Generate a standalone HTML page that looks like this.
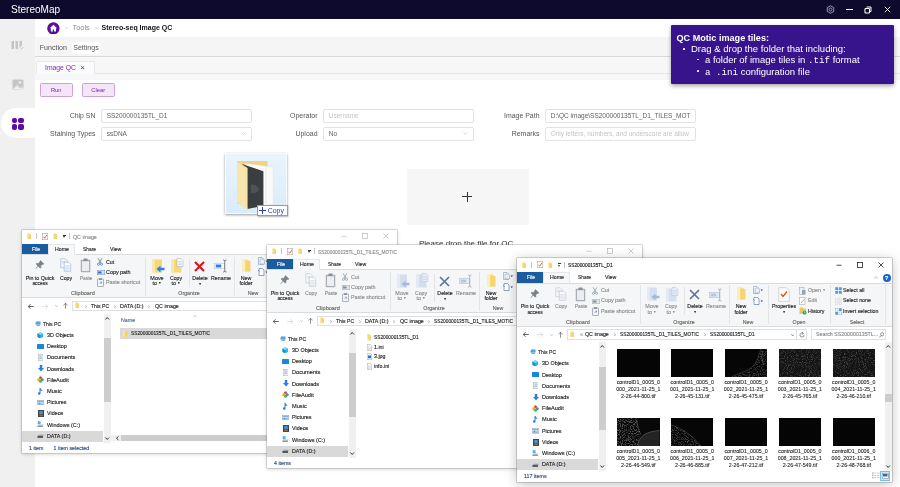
<!DOCTYPE html><html><head><meta charset="utf-8"><title>StereoMap</title><style>
*{box-sizing:border-box;margin:0;padding:0}
html,body{width:900px;height:487px;overflow:hidden;background:#fff;font-family:"Liberation Sans",sans-serif;}
body{position:relative;opacity:0.999}
.abs{position:absolute}
.t{position:absolute;white-space:nowrap;line-height:1}
.ic{position:absolute;display:block}
/* app */
#titlebar{left:0;top:0;width:900px;height:18.7px;background:#0e0a2d}
#sidebar{left:0;top:18px;width:35px;height:469px;background:#f0f0f0}
#sideact{left:0.5px;top:108px;width:34.5px;height:30px;background:#fff;border-radius:15px 0 0 15px}
#funcrow{left:35px;top:37px;width:865px;height:20.3px;background:#f5f5f5;border-bottom:1px solid #d9d9d9}
#tabrow{left:35px;top:57px;width:865px;height:23.3px;background:#f7f7f7}
#tabline{left:94px;top:72.7px;width:806px;height:1px;background:#e6e6e6}
#tab{left:35.5px;top:61.3px;width:59px;height:12.4px;background:#fbfbfb;border:1px solid #e8e8e8;border-bottom:none;border-radius:2px 2px 0 0}
.btn{position:absolute;height:14px;top:83px;width:32.5px;border:1px solid #c9a3d6;background:#f4e6f8;border-radius:1.5px;color:#7a1fa2;font-size:5.8px;text-align:center;line-height:12.5px}
.inp{position:absolute;height:13.5px;border:1px solid #e2e2e2;border-radius:2px;background:#fff;font-size:6.5px;color:#606266;line-height:12px;padding-left:4.7px;white-space:nowrap;overflow:hidden}
.inp.ph{color:#c0c4cc}
.lab{position:absolute;font-size:6.95px;color:#555;text-align:right;white-space:nowrap;line-height:13.5px;width:80px}
#drop{left:407px;top:168.6px;width:121.7px;height:56.3px;background:#f6f6f6}
#tip{left:671px;top:25px;width:223px;height:58.5px;background:#38148c;box-shadow:0 2px 4px rgba(0,0,0,.35);border-radius:1px;color:#fff}
/* explorer */
.win{position:absolute;width:375px;height:223.6px;background:#fff;box-shadow:0 0 0 0.5px rgba(110,110,110,.45),0 1px 4px rgba(0,0,0,.2);overflow:hidden;font-size:5.8px;color:#222;-webkit-text-stroke:0.14px}
.win.act{box-shadow:0 0 0 0.5px rgba(90,90,90,.5),0 2px 11px rgba(0,0,0,.25)}
.win .tabs{position:absolute;left:0;top:14px;width:100%;height:11px;background:#fff}
.win .file{position:absolute;left:0;top:14px;width:26px;height:10.5px;background:#1a5c9e;color:#fff;text-align:center;line-height:10.5px;font-size:5.8px}
.win .home{position:absolute;left:26px;top:14px;width:27px;height:11px;background:#f7f8f9;border:0.5px solid #e6e7e8;border-bottom:none;text-align:center;line-height:10.5px;font-size:5.8px}
.win .ribbon{position:absolute;left:0;top:24.5px;width:100%;height:44px;background:#f5f6f7;border-top:0.5px solid #dadbdc;border-bottom:0.5px solid #dadbdc}
.win .sep{position:absolute;top:27px;width:0.5px;height:39px;background:#e4e5e6}
.win .g{color:#8c8c8c}
.win .rl{position:absolute;white-space:nowrap;line-height:1;transform:translateX(-50%);text-align:center}
.win .grp{color:#666}
.win .addr{position:absolute;top:71px;height:10.5px;border:0.5px solid #e0e0e0;background:#fff}
.win .nav{position:absolute;left:0;top:84px;width:83px;height:129px}
.win .sb{position:absolute;background:#f0f0f0}
.win .thumb{position:absolute;background:#cdcdcd}
.win .sel{position:absolute;background:#d9d9d9}
.win .th{position:absolute;width:42.5px;height:28px;background:#050505;overflow:hidden}
.win .cap{position:absolute;width:54px;text-align:center;font-size:5.3px;line-height:7.1px;color:#1a1a1a;-webkit-text-stroke:0.08px;transform:translateX(-50%)}
</style></head><body>
<svg width="0" height="0" style="position:absolute"><defs><filter id="nz0" x="0" y="0" width="100%" height="100%"><feTurbulence type="fractalNoise" baseFrequency="0.95" numOctaves="2" seed="3"/><feColorMatrix type="matrix" values="0 0 0 0 1  0 0 0 0 1  0 0 0 0 1  4 0 0 0 -2.0"/></filter><filter id="nz1" x="0" y="0" width="100%" height="100%"><feTurbulence type="fractalNoise" baseFrequency="0.95" numOctaves="2" seed="11"/><feColorMatrix type="matrix" values="0 0 0 0 1  0 0 0 0 1  0 0 0 0 1  4 0 0 0 -2.0"/></filter><filter id="nz2" x="0" y="0" width="100%" height="100%"><feTurbulence type="fractalNoise" baseFrequency="0.9" numOctaves="2" seed="5"/><feColorMatrix type="matrix" values="0 0 0 0 1  0 0 0 0 1  0 0 0 0 1  5 0 0 0 -2.3"/></filter><filter id="nz3" x="0" y="0" width="100%" height="100%"><feTurbulence type="fractalNoise" baseFrequency="0.9" numOctaves="2" seed="8"/><feColorMatrix type="matrix" values="0 0 0 0 1  0 0 0 0 1  0 0 0 0 1  5 0 0 0 -2.3"/></filter><filter id="nz4" x="0" y="0" width="100%" height="100%"><feTurbulence type="fractalNoise" baseFrequency="0.9" numOctaves="2" seed="21"/><feColorMatrix type="matrix" values="0 0 0 0 1  0 0 0 0 1  0 0 0 0 1  5 0 0 0 -2.4"/></filter></defs></svg>
<div class="abs" id="sidebar"></div>
<div class="abs" id="sideact"></div>
<div class="abs" id="titlebar"></div>
<div class="t" style="left:11px;top:4.5px;font-size:10.05px;color:#fff;">StereoMap</div>
<svg class="ic" style="left:826px;top:5px;width:9px;height:9px" viewBox="0 0 18 18"><path d="M9 1.5 15.5 5.2v7.6L9 16.500 2.500 12.800V5.200z" fill="none" stroke="#b9b6cc" stroke-width="1.6"/><circle cx="9" cy="9" r="3" fill="none" stroke="#b9b6cc" stroke-width="1.5"/></svg>
<div class="abs" style="left:845.5px;top:9px;width:7.5px;height:1.2px;background:#fff"></div>
<svg class="ic" style="left:864px;top:5.500px;width:8px;height:8px" viewBox="0 0 16 16"><path d="M5 2h9v9h-3" fill="none" stroke="#fff" stroke-width="2"/><rect x="2" y="5" width="9" height="9" rx="1.5" fill="none" stroke="#fff" stroke-width="2.2"/></svg>
<svg class="ic" style="left:883.5px;top:6px;width:7px;height:7px" viewBox="0 0 14 14"><path d="M1.500 1.500l11 11M12.500 1.500l-11 11" stroke="#fff" stroke-width="1.800" fill="none"/></svg>
<svg class="ic" style="left:11px;top:40px;width:13px;height:10px" viewBox="0 0 26 20"><path d="M1 3l5-2v16l-5 2zM9 1l5 2v16l-5-2zM17 3l5-2v9l-5 7z" fill="#c4c4c4"/><path d="M20 19l4-5" stroke="#c4c4c4" stroke-width="2"/></svg>
<svg class="ic" style="left:11.500px;top:78.500px;width:12px;height:11px" viewBox="0 0 24 22"><rect x="1" y="1" width="22" height="20" rx="2" fill="#c6c6c6"/><path d="M1 20l9-9 6 6 3-2 4 4v2z" fill="#f0f0f0"/><path d="M2 19l8-6 6 5 3-2 3 3" stroke="#c6c6c6" stroke-width="1.500" fill="none"/><circle cx="16" cy="7" r="2.600" fill="#f0f0f0"/></svg>
<div class="abs" style="left:11.7px;top:117.8px;width:5.5px;height:5.5px;border-radius:1.9px;background:#5d0aa6"></div>
<div class="abs" style="left:18.299999999999997px;top:117.8px;width:5.5px;height:5.5px;border-radius:1.9px;background:#5d0aa6"></div>
<div class="abs" style="left:11.7px;top:124.39999999999999px;width:5.5px;height:5.5px;border-radius:1.9px;background:#5d0aa6"></div>
<div class="abs" style="left:18.299999999999997px;top:124.39999999999999px;width:5.5px;height:5.5px;border-radius:1.9px;background:#5d0aa6"></div>
<svg class="ic" style="left:47px;top:21.700px;width:12.8px;height:12.8px" viewBox="0 0 26 26"><circle cx="13" cy="13" r="12.500" fill="#5b0f9e"/><path d="M13 5.500 5.500 12.500h2.300v7h4v-4.500h2.400v4.500h4v-7h2.300z" fill="#fff"/></svg>
<div class="t" style="left:64.5px;top:25px;font-size:6px;color:#c8c8c8;">&gt;</div>
<div class="t" style="left:72.5px;top:24.2px;font-size:7.4px;color:#8a8a8a;">Tools</div>
<div class="t" style="left:94.5px;top:25px;font-size:6px;color:#c8c8c8;">&gt;</div>
<div class="t" style="left:101.5px;top:24.2px;font-size:7.0px;color:#111;font-weight:bold;">Stereo-seq Image QC</div>
<div class="abs" id="funcrow"></div>
<div class="abs" style="left:71.500px;top:41.500px;width:28px;height:12.500px;background:#fff;border-radius:1.500px"></div>
<div class="t" style="left:39.8px;top:44px;font-size:7.05px;color:#555;">Function</div>
<div class="t" style="left:73.2px;top:44px;font-size:7.05px;color:#555;">Settings</div>
<div class="abs" id="tabrow"></div>
<div class="abs" id="tabline"></div>
<div class="abs" id="tab"></div>
<div class="t" style="left:45px;top:65.2px;font-size:6.8px;color:#8a2bb0;">Image QC</div>
<div class="t" style="left:80.3px;top:64px;font-size:8px;color:#6a1b9a;">×</div>
<div class="btn" style="left:40px">Run</div>
<div class="btn" style="left:82px">Clear</div>
<div class="lab" style="left:15.5px;top:109px">Chip SN</div>
<div class="inp" style="left:101px;top:109px;width:151px">SS200000135TL_D1</div>
<div class="lab" style="left:237.5px;top:109px">Operator</div>
<div class="inp ph" style="left:323px;top:109px;width:151px">Username</div>
<div class="lab" style="left:459.5px;top:109px">Image Path</div>
<div class="inp" style="left:545px;top:109px;width:151px">D:\QC image\SS200000135TL_D1_TILES_MOT</div>
<div class="lab" style="left:15.5px;top:127px">Staining Types</div>
<div class="inp" style="left:101px;top:127px;width:151px">ssDNA</div>
<div class="lab" style="left:237.5px;top:127px">Upload</div>
<div class="inp" style="left:323px;top:127px;width:151px">No</div>
<div class="lab" style="left:459.5px;top:127px">Remarks</div>
<div class="inp ph" style="left:545px;top:127px;width:151px">Only letters, numbers, and underscore are allow</div>
<svg class="ic" style="left:241.0px;top:132.300px;width:5px;height:3px" viewBox="0 0 10 6"><path d="M1 1l4 4 4-4" fill="none" stroke="#c0c4cc" stroke-width="1.200"/></svg>
<svg class="ic" style="left:463.0px;top:132.300px;width:5px;height:3px" viewBox="0 0 10 6"><path d="M1 1l4 4 4-4" fill="none" stroke="#c0c4cc" stroke-width="1.200"/></svg>
<div class="abs" id="drop"></div>
<div class="abs" style="left:462px;top:196px;width:10px;height:1px;background:#333"></div>
<div class="abs" style="left:466.500px;top:191.500px;width:1px;height:10px;background:#333"></div>
<div class="t" style="left:419px;top:240px;font-size:8px;color:#333;">Please drop the file for QC</div>
<div class="abs" style="left:225px;top:153px;width:62px;height:61px;background:linear-gradient(#e9f4fc,#d9ecf9);box-shadow:0 1px 2.500px rgba(0,0,0,.4);border:0.500px solid #f4fafe"></div>
<svg class="ic" style="left:236px;top:160px;width:40px;height:52px" viewBox="0 0 80 104">
<path d="M2 2h61v86H2z" fill="#efd488"/>
<path d="M18.6 6.800l55.800 7.500v74l-19.600 3.200z" fill="#fafafa" stroke="#dcdcdc" stroke-width="0.8"/>
<path d="M60 14v76" stroke="#e2e2e2" stroke-width="1.2"/>
<path d="M12 8l42.800 14.600v68.800L22.800 98z" fill="#3b3e40"/>
<path d="M30 50c8-2 14 2 16 8-2 6-8 10-16 8z" fill="#56595b" opacity=".8"/>
<path d="M2 2.800 22.800 16v83.800L2 85z" fill="#f8e5ab"/>
<path d="M2 2.800 22.800 16v83.800" fill="none" stroke="#e8cf86" stroke-width="0.8"/>
</svg>
<div class="abs" style="left:256.8px;top:204.9px;width:30.8px;height:11.2px;background:#fff;border:0.7px solid #9a9a9a;box-shadow:0.5px 1px 1.5px rgba(0,0,0,.3)"></div>
<div class="abs" style="left:259.3px;top:210px;width:6.6px;height:0.9px;background:#2440c0"></div>
<div class="abs" style="left:262.15px;top:207.1px;width:0.9px;height:6.6px;background:#2440c0"></div>
<div class="t" style="left:267.8px;top:207.7px;font-size:6.9px;color:#2b3fb5;">Copy</div>
<div class="abs" id="tip"></div>
<div class="t" style="left:676.5px;top:33.6px;font-size:9.1px;color:#fff;font-weight:bold;">QC Motic image tiles:</div>
<div class="abs" style="left:683px;top:48px;width:1.8px;height:1.8px;background:#fff;border-radius:0.4px"></div>
<div class="t" style="left:691px;top:43.6px;font-size:9.5px;color:#fff;">Drag &amp; drop the folder that including:</div>
<div class="abs" style="left:697.4px;top:58.6px;width:1.8px;height:1.8px;background:#fff;border-radius:0.4px"></div>
<div class="t" style="left:705px;top:55.2px;font-size:9.5px;color:#fff;">a folder of image tiles in <span style="font-family:'Liberation Mono',monospace;font-size:9.2px">.tif</span> format</div>
<div class="abs" style="left:697.4px;top:69.8px;width:1.8px;height:1.8px;background:#fff;border-radius:0.4px"></div>
<div class="t" style="left:705px;top:66.8px;font-size:9.5px;color:#fff;"><span style="font-family:'Liberation Mono',monospace;font-size:9.2px">a .ini</span> configuration file</div>
<div class="win" style="left:22px;top:229.5px">
<svg class="ic" style="left:4.8px;top:3.6px;width:4.6px;height:6.2px" viewBox="0 0 11 14"><path d="M0.5 0.5h6l1 1.5v12h-7z" fill="#f7dc82"/><path d="M0.5 0.5h2.5v13H0.5z" fill="#fcedb4"/><path d="M3.5 2.5h7v11.5h-7z" fill="#f5d46c"/></svg>
<div class="abs" style="left:14.4px;top:3.6px;width:0.5px;height:6px;background:#c4c4c4"></div>
<svg class="ic" style="left:20px;top:3.4px;width:6px;height:7px" viewBox="0 0 12 14"><rect x="0.5" y="1" width="11" height="12.5" fill="#fff" stroke="#9a9a9a" stroke-width="1"/><path d="M3 7.5l2.500 3L9.500 4" stroke="#e04a1e" stroke-width="1.6" fill="none"/></svg>
<svg class="ic" style="left:30.8px;top:3.6px;width:4.6px;height:6.2px" viewBox="0 0 11 14"><path d="M0.5 0.5h6l1 1.5v12h-7z" fill="#f7dc82"/><path d="M0.5 0.5h2.5v13H0.5z" fill="#fcedb4"/><path d="M3.5 2.5h7v11.5h-7z" fill="#f5d46c"/></svg>
<div class="abs" style="left:40.5px;top:5.4px;width:3.4px;height:0.6px;background:#333"></div>
<div class="abs" style="left:40.5px;top:6.6px;border-left:1.7px solid transparent;border-right:1.7px solid transparent;border-top:2px solid #333;width:0;height:0"></div>
<div class="abs" style="left:47.4px;top:3.6px;width:0.5px;height:6px;background:#c4c4c4"></div>
<div class="t" style="left:51px;top:5px;font-size:5.8px;transform-origin:0 50%;transform:scaleX(0.91);color:#8a8a8a;">QC image</div>
<svg class="ic" style="left:318.5px;top:3.7px;width:6px;height:6px" viewBox="0 0 12 12"><path d="M1 6.5h10" stroke="#a4a4a4" stroke-width="1.1"/></svg>
<svg class="ic" style="left:339.5px;top:3.7px;width:6px;height:6px" viewBox="0 0 12 12"><rect x="1" y="1" width="10" height="10" fill="none" stroke="#a4a4a4" stroke-width="1.1"/></svg>
<svg class="ic" style="left:361px;top:3.7px;width:6px;height:6px" viewBox="0 0 12 12"><path d="M1 1l10 10M11 1L1 11" stroke="#a4a4a4" stroke-width="1.1"/></svg>
<div class="ribbon"></div>
<div class="file"></div>
<div class="home"></div>
<div class="t" style="left:9.5px;top:17.3px;font-size:5.8px;transform-origin:0 50%;transform:scaleX(0.856);color:#fff;">File</div>
<div class="t" style="left:33px;top:17.3px;font-size:5.8px;transform-origin:0 50%;transform:scaleX(0.905);color:#222;">Home</div>
<div class="t" style="left:60.8px;top:17.3px;font-size:5.8px;transform-origin:0 50%;transform:scaleX(0.84);color:#222;">Share</div>
<div class="t" style="left:88px;top:17.3px;font-size:5.8px;transform-origin:0 50%;transform:scaleX(0.906);color:#222;">View</div>
<svg class="ic" style="left:13px;top:30.5px;width:10px;height:11px" viewBox="0 0 20 22"><path d="M11 1l7 7-2 1-1-0.500-3.500 3.500 0.500 3-1.500 1.500L6 12l-4.500 5.500L6 12 2 8l1.500-1.500 3 0.500L10 3.500 9.500 2.500z" fill="#7a828a" stroke="#6a727a" stroke-width="0.800"/></svg>
<div class="rl " style="left:18px;top:46.4px;transform:translateX(-50%) scaleX(0.918)">Pin to Quick</div>
<div class="rl " style="left:18px;top:51.9px;transform:translateX(-50%) scaleX(0.842)">access</div>
<svg class="ic" style="left:38px;top:28.5px;width:12px;height:14px;" viewBox="0 0 24 28"><path d="M1.500 1.500h9l4 4v14h-13z" fill="#f4f8ff" stroke="#8aa4cc" stroke-width="1"/><path d="M3.500 7h8M3.500 10h5" stroke="#b4c8ec" stroke-width="1.2"/><path d="M8.500 8.500h9l4 4v14h-13z" fill="#fff" stroke="#7d97c0" stroke-width="1"/><path d="M10.500 14h9v11h-9z" fill="#cfddf8"/><path d="M10.500 16.500h9M10.500 19.500h9M10.500 22.500h9" stroke="#fff" stroke-width="1"/></svg>
<div class="rl " style="left:44px;top:46.4px;transform:translateX(-50%) scaleX(0.886)">Copy</div>
<svg class="ic" style="left:58.0px;top:28.5px;width:11px;height:15px;opacity:.75;filter:saturate(.35);" viewBox="0 0 22 30"><rect x="1.500" y="3.500" width="19" height="25" rx="1" fill="#8497b8" /><rect x="4" y="6.500" width="14" height="19.500" fill="#e6ebf8"/><rect x="7" y="1" width="8" height="5" rx="1" fill="#5d6f8c"/></svg>
<div class="rl g " style="left:63.5px;top:46.4px;transform:translateX(-50%) scaleX(0.85)">Paste</div>
<svg class="ic" style="left:75px;top:28.5px;width:6px;height:8px;" viewBox="0 0 12 16"><path d="M2 0.500l6 10M10 0.500l-6 10" stroke="#5a6a7c" stroke-width="1.400"/><circle cx="3" cy="12.500" r="2.200" fill="none" stroke="#2a7fd8" stroke-width="1.500"/><circle cx="9" cy="12.500" r="2.200" fill="none" stroke="#2a7fd8" stroke-width="1.500"/></svg>
<div class="t" style="left:84px;top:30.2px;font-size:5.8px;transform-origin:0 50%;transform:scaleX(0.92);">Cut</div>
<svg class="ic" style="left:74.5px;top:40.5px;width:8px;height:5px;" viewBox="0 0 16 10"><rect x="0.500" y="0.500" width="15" height="9" fill="#cfe0f4" stroke="#6f94c4"/><rect x="2" y="3" width="7" height="4" fill="#2a6fc8"/></svg>
<div class="t" style="left:84px;top:40.4px;font-size:5.8px;transform-origin:0 50%;transform:scaleX(0.93);">Copy path</div>
<svg class="ic" style="left:75.0px;top:48.8px;width:7px;height:9px;opacity:.75;filter:saturate(.35);" viewBox="0 0 14 18"><rect x="1" y="2" width="12" height="15" rx="1" fill="#f4f7fb" stroke="#6b84ac" stroke-width="1.600"/><rect x="4" y="0.500" width="6" height="3.500" fill="#5d6f8c"/><path d="M5 12l4-4M6 8h3v3" stroke="#2a6fc8" stroke-width="1.400" fill="none"/></svg>
<div class="t g" style="left:84px;top:50.6px;font-size:5.8px;transform-origin:0 50%;transform:scaleX(0.922);">Paste shortcut</div>
<div class="rl grp" style="left:61px;top:61.8px;transform:translateX(-50%) scaleX(0.959)">Clipboard</div>
<div class="sep" style="left:123.3px"></div>
<svg class="ic" style="left:129.5px;top:29px;width:13px;height:14px" viewBox="0 0 26 28"><path d="M1 1h18l1 1v25H1z" fill="#f8d876"/><path d="M1 1h5v26H1z" fill="#fbe8a8"/><path d="M25 17.500h-8v-4.500l-8 7 8 7v-4.500h8z" fill="#2a84e0"/></svg>
<div class="rl " style="left:134.5px;top:46.4px;transform:translateX(-50%) scaleX(0.938)">Move</div>
<div class="rl " style="left:134.5px;top:51.9px;transform:translateX(-50%) scaleX(0.91)">to <span style="font-size:3.5px;vertical-align:1px">&#9660;</span></div>
<svg class="ic" style="left:149.3px;top:28.5px;width:13px;height:15px" viewBox="0 0 26 30"><path d="M1 3h19l1 1v25H1z" fill="#f8d876"/><path d="M1 3h5v26H1z" fill="#fbe8a8"/><path d="M12 1h8l4 4v12H12z" fill="#fff" stroke="#8fa7c4" stroke-width="1"/><path d="M14 7h8M14 10h8M14 13h8" stroke="#a9c4f0" stroke-width="1.2"/></svg>
<div class="rl " style="left:154px;top:46.4px;transform:translateX(-50%) scaleX(0.886)">Copy</div>
<div class="rl " style="left:154px;top:51.9px;transform:translateX(-50%) scaleX(0.91)">to <span style="font-size:3.5px;vertical-align:1px">&#9660;</span></div>
<div class="sep" style="left:166.5px;height:28px;top:29px"></div>
<svg class="ic" style="left:172.0px;top:31.0px;width:11px;height:11px" viewBox="0 0 22 22"><path d="M2 2l18 18M20 2L2 20" stroke="#d8171f" stroke-width="4.4" fill="none"/></svg>
<div class="rl " style="left:177.5px;top:46.4px;transform:translateX(-50%) scaleX(0.91)">Delete</div>
<div class="rl " style="left:177.5px;top:52.199999999999996px;transform:translateX(-50%) scaleX(0.91)"><span style="font-size:3.5px;vertical-align:1px">&#9660;</span></div>
<svg class="ic" style="left:191.5px;top:29.5px;width:14px;height:14px" viewBox="0 0 28 28"><rect x="1" y="8.500" width="20" height="11" fill="#fff" stroke="#a8b8d4" stroke-width="1"/><rect x="3.500" y="11" width="11" height="6" fill="#2a7fe0"/><path d="M18 2c2.500 0 3.500 1 3.500 2.500 0-1.500 1-2.500 3.500-2.500M18 26c2.500 0 3.500-1 3.500-2.500 0 1.500 1 2.500 3.500 2.500M21.500 4.500v19" stroke="#444" stroke-width="1.300" fill="none"/></svg>
<div class="rl " style="left:198.5px;top:46.4px;transform:translateX(-50%) scaleX(0.91)">Rename</div>
<div class="rl grp" style="left:167px;top:61.8px;transform:translateX(-50%) scaleX(0.91)">Organize</div>
<div class="sep" style="left:212px"></div>
<svg class="ic" style="left:219.5px;top:29px;width:9px;height:13px" viewBox="0 0 18 26"><path d="M1 1h11l2 3v21H1z" fill="#f8de86"/><path d="M1 1h5v24H1z" fill="#fcefbe"/><path d="M7 4h10v21H7z" fill="#f6d56e"/></svg>
<div class="rl " style="left:224px;top:46.4px;transform:translateX(-50%) scaleX(0.91)">New</div>
<div class="rl " style="left:224px;top:51.9px;transform:translateX(-50%) scaleX(0.91)">folder</div>
<svg class="ic" style="left:236.0px;top:27.5px;width:10px;height:8px" viewBox="0 0 20 16"><path d="M1 1h7l3 3v11H1z" fill="#fff" stroke="#7d97b8" stroke-width="1.200"/><path d="M4 4h7l2 2v8H4z" fill="#eaf1fa" stroke="#7d97b8" stroke-width="1"/><path d="M15 7h5l-2.500 3z" fill="#333"/></svg>
<svg class="ic" style="left:236.0px;top:38.5px;width:10px;height:8px" viewBox="0 0 20 16"><path d="M2 1h7l3 3v11H2z" fill="#fff" stroke="#5f7fa8" stroke-width="1.400"/><path d="M0 4l3 3" stroke="#2a7fe0" stroke-width="1.500"/><path d="M15 7h5l-2.500 3z" fill="#333"/></svg>
<div class="rl grp" style="left:231px;top:61.8px;transform:translateX(-50%) scaleX(0.91)">New</div>
<div class="sep" style="left:251px"></div>
<svg class="ic" style="left:260.5px;top:28.5px;width:12px;height:15px" viewBox="0 0 24 30"><path d="M1.500 1.500h15l6 6v21h-21z" fill="#fff" stroke="#a8a8a8" stroke-width="1"/><path d="M6 14l4 5 8-10" stroke="#e04a1e" stroke-width="2.600" fill="none"/></svg>
<div class="rl " style="left:266.5px;top:46.4px;transform:translateX(-50%) scaleX(0.91)">Properties</div>
<div class="rl " style="left:266.5px;top:52.199999999999996px;transform:translateX(-50%) scaleX(0.91)"><span style="font-size:3.5px;vertical-align:1px">&#9660;</span></div>
<svg class="ic" style="left:282.0px;top:28.5px;width:7px;height:8px;" viewBox="0 0 14 16"><rect x="1" y="1" width="9" height="14" fill="#eaf1fa" stroke="#7d97b8" stroke-width="1.200"/><rect x="6" y="6" width="7" height="9" fill="#4a8fd8"/></svg>
<div class="t" style="left:291px;top:30.2px;font-size:5.8px;transform-origin:0 50%;transform:scaleX(0.91);">Open <span style="font-size:3.5px;vertical-align:1px">&#9660;</span></div>
<svg class="ic" style="left:282.0px;top:39px;width:7px;height:8px;" viewBox="0 0 14 16"><rect x="1" y="1" width="11" height="14" fill="#fff" stroke="#7d97b8" stroke-width="1.200"/><path d="M4 12l7-8" stroke="#4a8fd8" stroke-width="1.600"/></svg>
<div class="t" style="left:291px;top:40.4px;font-size:5.8px;transform-origin:0 50%;transform:scaleX(0.91);">Edit</div>
<svg class="ic" style="left:282.0px;top:49.3px;width:8px;height:8px" viewBox="0 0 16 16"><path d="M1 1h6l1 2h6v11H1z" fill="#f0c84e"/><circle cx="11" cy="11" r="4.500" fill="#3aa048" stroke="#fff" stroke-width="0.800"/><path d="M11 8.500v2.500h2" stroke="#fff" stroke-width="1" fill="none"/></svg>
<div class="t" style="left:291px;top:50.6px;font-size:5.8px;transform-origin:0 50%;transform:scaleX(0.91);">History</div>
<div class="rl grp" style="left:282px;top:61.8px;transform:translateX(-50%) scaleX(0.91)">Open</div>
<div class="sep" style="left:313px"></div>
<svg class="ic" style="left:317.5px;top:29.0px;width:7px;height:7px" viewBox="0 0 14 14"><rect x="0.500" y="0.500" width="6" height="6" fill="#4a9be8"/><rect x="7.500" y="0.500" width="6" height="6" fill="#4a9be8"/><rect x="0.500" y="7.500" width="6" height="6" fill="#4a9be8"/><rect x="7.500" y="7.500" width="6" height="6" fill="#4a9be8"/><path d="M0 7h14M7 0v14" stroke="#fff" stroke-width="1"/></svg>
<div class="t" style="left:326px;top:30.2px;font-size:5.8px;transform-origin:0 50%;transform:scaleX(0.91);">Select all</div>
<svg class="ic" style="left:317.5px;top:39.5px;width:7px;height:7px" viewBox="0 0 14 14"><rect x="0.500" y="0.500" width="5.500" height="5.500" fill="#f4f4f4" stroke="#bbb" stroke-dasharray="1.500 1"/><rect x="8" y="0.500" width="5.500" height="5.500" fill="#f4f4f4" stroke="#bbb" stroke-dasharray="1.500 1"/><rect x="0.500" y="8" width="5.500" height="5.500" fill="#f4f4f4" stroke="#bbb" stroke-dasharray="1.500 1"/><rect x="8" y="8" width="5.500" height="5.500" fill="#f4f4f4" stroke="#bbb" stroke-dasharray="1.500 1"/></svg>
<div class="t" style="left:326px;top:40.4px;font-size:5.8px;transform-origin:0 50%;transform:scaleX(0.91);">Select none</div>
<svg class="ic" style="left:317.5px;top:49.8px;width:7px;height:7px" viewBox="0 0 14 14"><rect x="0.500" y="0.500" width="5.500" height="5.500" fill="#fff" stroke="#8ab" /><rect x="8" y="0.500" width="5.500" height="5.500" fill="#4a9be8"/><rect x="0.500" y="8" width="5.500" height="5.500" fill="#4a9be8"/><rect x="8" y="8" width="5.500" height="5.500" fill="#fff" stroke="#8ab"/></svg>
<div class="t" style="left:326px;top:50.6px;font-size:5.8px;transform-origin:0 50%;transform:scaleX(0.91);">Invert selection</div>
<div class="rl grp" style="left:340px;top:61.8px;transform:translateX(-50%) scaleX(0.91)">Select</div>
<div class="sep" style="left:367.5px"></div>
<svg class="ic" style="left:6px;top:74.0px;width:6px;height:5px" viewBox="0 0 12 10"><path d="M5 0.5L0.5 5 5 9.500M0.500 5h11" stroke="#444" stroke-width="1.7" fill="none"/></svg>
<svg class="ic" style="left:20px;top:74.0px;width:6px;height:5px" viewBox="0 0 12 10"><path d="M7 0.5L11.5 5 7 9.500M11.500 5H0.500" stroke="#c8c8c8" stroke-width="1.2" fill="none"/></svg>
<svg class="ic" style="left:32.5px;top:75.7px;width:3.5px;height:2px" viewBox="0 0 7 4"><path d="M0.5 0.5l3 3 3-3" stroke="#888" stroke-width="1" fill="none"/></svg>
<svg class="ic" style="left:40.5px;top:73.5px;width:5px;height:6px" viewBox="0 0 10 12"><path d="M0.5 5L5 0.5 9.500 5M5 0.500v11" stroke="#444" stroke-width="1.2" fill="none"/></svg>
<div class="addr" style="left:50px;width:239.5px"></div>
<svg class="ic" style="left:52.6px;top:72.5px;width:4.6px;height:6.2px" viewBox="0 0 11 14"><path d="M0.5 0.5h6l1 1.5v12h-7z" fill="#f7dc82"/><path d="M0.5 0.5h2.5v13H0.5z" fill="#fcedb4"/><path d="M3.5 2.5h7v11.5h-7z" fill="#f5d46c"/></svg>
<svg class="ic" style="left:62.5px;top:75.4px;width:2px;height:3.4px" viewBox="0 0 4 7"><path d="M0.7 0.700l2.600 2.800-2.600 2.800" stroke="#555" stroke-width="1" fill="none"/></svg>
<div class="t" style="left:69.0px;top:74.3px;font-size:5.8px;transform-origin:0 50%;transform:scaleX(0.878);color:#222;">This PC</div>
<svg class="ic" style="left:91.6098475px;top:75.4px;width:2px;height:3.4px" viewBox="0 0 4 7"><path d="M0.7 0.700l2.600 2.800-2.600 2.800" stroke="#555" stroke-width="1" fill="none"/></svg>
<div class="t" style="left:98.1098475px;top:74.3px;font-size:5.8px;transform-origin:0 50%;transform:scaleX(0.919);color:#222;">DATA (D:)</div>
<svg class="ic" style="left:126.102287578125px;top:75.4px;width:2px;height:3.4px" viewBox="0 0 4 7"><path d="M0.7 0.700l2.600 2.800-2.600 2.800" stroke="#555" stroke-width="1" fill="none"/></svg>
<div class="t" style="left:132.60228757812501px;top:74.3px;font-size:5.8px;transform-origin:0 50%;transform:scaleX(0.91);color:#222;">QC image</div>
<div class="abs" style="left:279px;top:71.5px;width:0.5px;height:9.5px;background:#e0e0e0"></div>
<svg class="ic" style="left:273.5px;top:75.5px;width:3.5px;height:2.5px" viewBox="0 0 7 5"><path d="M0.5 0.5l3 3.500 3-3.500" stroke="#444" stroke-width="1.1" fill="none"/></svg>
<svg class="ic" style="left:281.5px;top:73.5px;width:6px;height:6px" viewBox="0 0 12 12"><path d="M10 6a4 4 0 1 1-1.5-3.100" stroke="#444" stroke-width="1.2" fill="none"/><path d="M6.500 0.500l2.500 2.500-3 1.500" stroke="#444" stroke-width="1.1" fill="none"/></svg>
<div class="addr" style="left:294px;width:75px"></div>
<div class="t" style="left:299px;top:73.7px;font-size:5.8px;transform-origin:0 50%;transform:scaleX(0.91);color:#8a8a8a;">Search QC image...</div>
<svg class="ic" style="left:361.5px;top:73.5px;width:5.5px;height:6px" viewBox="0 0 11 12"><circle cx="6.5" cy="4.5" r="3.3" stroke="#555" stroke-width="1.2" fill="none"/><path d="M4.200 7L0.800 11" stroke="#555" stroke-width="1.4"/></svg>
<svg class="ic" style="left:12.5px;top:91.4px;width:6px;height:5.5px" viewBox="0 0 13 12"><rect x="2" y="1" width="10" height="7" fill="#4aa8ea"/><path d="M0 3l3 6h6" stroke="#9ab" stroke-width="1.500" fill="none"/><rect x="4" y="9.500" width="7" height="1.500" fill="#6a8aa8"/></svg>
<div class="t" style="left:21px;top:92.69999999999999px;font-size:5.8px;transform-origin:0 50%;transform:scaleX(0.878);color:#222;">This PC</div>
<svg class="ic" style="left:15.3px;top:102.43px;width:6.500px;height:6.500px" viewBox="0 0 13 13"><path d="M6.500 0.500l5.500 2.500v7l-5.500 2.500L1 10V3z" fill="#29b6e8"/><path d="M6.500 6v6.500L1 10V3z" fill="#1a8fd0"/><path d="M1 3l5.500 3L12 3 6.500 0.500z" fill="#7fdcf7"/></svg>
<div class="t" style="left:25px;top:103.69999999999999px;font-size:5.8px;transform-origin:0 50%;transform:scaleX(0.934);color:#222;">3D Objects</div>
<div class="abs" style="left:15.3px;top:114.16px;width:7px;height:5px;background:#1a86e0;border-radius:0.500px"></div>
<div class="t" style="left:25px;top:114.69999999999999px;font-size:5.8px;transform-origin:0 50%;transform:scaleX(0.935);color:#222;">Desktop</div>
<svg class="ic" style="left:15.8px;top:124.39px;width:5.500px;height:7px" viewBox="0 0 11 14"><rect x="0.500" y="0.500" width="10" height="13" fill="#e8eef4" stroke="#9fb2c4"/><path d="M2.500 4h6M2.500 6.500h6M2.500 9h6" stroke="#8aa0b6" stroke-width="1"/></svg>
<div class="t" style="left:25px;top:125.69999999999999px;font-size:5.8px;transform-origin:0 50%;transform:scaleX(0.968);color:#222;">Documents</div>
<svg class="ic" style="left:15.8px;top:135.62px;width:6px;height:7px" viewBox="0 0 12 14"><path d="M3.500 0h5v6h3.500L6 13 0 6h3.500z" fill="#2a7fe0"/></svg>
<div class="t" style="left:25px;top:137.7px;font-size:5.8px;transform-origin:0 50%;transform:scaleX(0.944);color:#222;">Downloads</div>
<svg class="ic" style="left:15.3px;top:146.85000000000002px;width:7px;height:7px" viewBox="0 0 14 14"><circle cx="7" cy="3.500" r="3" fill="#e8452c"/><circle cx="3.500" cy="7.500" r="3" fill="#f4a91e"/><circle cx="10.500" cy="7.500" r="3" fill="#3b8de0"/><circle cx="7" cy="10.500" r="3" fill="#4cb648"/></svg>
<div class="t" style="left:25px;top:148.7px;font-size:5.8px;transform-origin:0 50%;transform:scaleX(0.962);color:#222;">FileAudit</div>
<svg class="ic" style="left:16.3px;top:158.07999999999998px;width:5px;height:7px" viewBox="0 0 10 14"><path d="M3 0h2c0 3 4 3 4 7-1-2-3-2-4-2v6a2.500 2.500 0 1 1-2-2.400z" fill="#1e7fe0"/></svg>
<div class="t" style="left:25px;top:159.7px;font-size:5.8px;transform-origin:0 50%;transform:scaleX(0.977);color:#222;">Music</div>
<svg class="ic" style="left:15.3px;top:170.31px;width:7px;height:5.500px" viewBox="0 0 14 11"><rect x="0.500" y="0.500" width="13" height="10" fill="#dfe8f0" stroke="#8fa3b6"/><path d="M1 9l4-4 3 3 2-1.500 3 2.500z" fill="#4a90c8"/><rect x="1.500" y="1.500" width="11" height="3" fill="#7db4e0"/></svg>
<div class="t" style="left:25px;top:170.7px;font-size:5.8px;transform-origin:0 50%;transform:scaleX(0.935);color:#222;">Pictures</div>
<svg class="ic" style="left:15.8px;top:180.54000000000002px;width:6px;height:7px" viewBox="0 0 12 14"><rect x="0" y="0" width="12" height="14" fill="#3c4650"/><rect x="2.500" y="2" width="7" height="6" fill="#4a8fd0"/><rect x="2.500" y="9" width="7" height="3.500" fill="#9a6a3a"/></svg>
<div class="t" style="left:25px;top:181.7px;font-size:5.8px;transform-origin:0 50%;transform:scaleX(0.925);color:#222;">Videos</div>
<svg class="ic" style="left:15.3px;top:191.77px;width:7.5px;height:7px" viewBox="0 0 15 14"><path d="M1 9l3-2h10l-2 2.500v2.500H1z" fill="#c4cad0"/><path d="M1 9.500h11v2.500H1z" fill="#8e969e"/><path d="M1.500 0.500h5.500v6H1.500z" fill="#2aa4ea"/><path d="M4.200 0.500v6M1.500 3.500h5.500" stroke="#bfe6fa" stroke-width="0.6"/><rect x="9.500" y="10.300" width="2" height="1" fill="#5ae06a"/></svg>
<div class="t" style="left:25px;top:193.7px;font-size:5.8px;transform-origin:0 50%;transform:scaleX(0.954);color:#222;">Windows (C:)</div>
<div class="sel" style="left:0;top:201.0px;width:81px;height:11px"></div>
<svg class="ic" style="left:15.3px;top:204.5px;width:7.5px;height:5px" viewBox="0 0 15 10"><path d="M1 4l3-2.500h10l-2 3v3H1z" fill="#9aa0a6"/><path d="M1 4.500h11v3H1z" fill="#3c4248"/></svg>
<div class="t" style="left:25px;top:204.7px;font-size:5.8px;transform-origin:0 50%;transform:scaleX(0.919);color:#222;">DATA (D:)</div>
<div class="sb" style="left:81.8px;top:84px;width:7px;height:129px"></div>
<svg class="ic" style="left:83.3px;top:87px;width:4.4px;height:3px;overflow:visible" viewBox="0 0 8.8 6"><path d="M0.800 5l3.600-4 3.600 4" stroke="#333" stroke-width="2" fill="none"/></svg>
<svg class="ic" style="left:83.3px;top:207.3px;width:4.4px;height:3px;overflow:visible" viewBox="0 0 8.8 6"><path d="M0.800 1l3.600 4 3.600-4" stroke="#333" stroke-width="2" fill="none"/></svg>
<div class="thumb" style="left:81.8px;top:108.5px;width:7px;height:63.5px"></div>
<div class="t" style="left:99px;top:88.5px;font-size:5.8px;transform-origin:0 50%;transform:scaleX(0.91);color:#4a6a9a;">Name</div>
<svg class="ic" style="left:171px;top:85.5px;width:4px;height:2.500px" viewBox="0 0 8 5"><path d="M0.500 4.500l3.500-4 3.500 4" stroke="#999" stroke-width="1" fill="none"/></svg>
<div class="abs" style="left:97.500px;top:98.500px;width:280px;height:11px;background:#d9d9d9"></div>
<svg class="ic" style="left:101px;top:100.5px;width:5px;height:7px" viewBox="0 0 11 14"><path d="M0.5 0.5h6l1 1.5v12h-7z" fill="#f7dc82"/><path d="M0.5 0.5h2.5v13H0.5z" fill="#fcedb4"/><path d="M3.5 2.5h7v11.5h-7z" fill="#f5d46c"/></svg>
<div class="t" style="left:108.5px;top:101.3px;font-size:5.8px;transform-origin:0 50%;transform:scaleX(0.828);color:#222;">SS200000135TL_D1_TILES_MOTIC</div>
<div class="sb" style="left:89px;top:205px;width:286px;height:6.8px"></div>
<svg class="ic" style="left:93.5px;top:206.3px;width:3px;height:4.4px;overflow:visible" viewBox="0 0 6 8.8"><path d="M5 0.800l-4 3.600 4 3.600" stroke="#333" stroke-width="2" fill="none"/></svg>
<div class="thumb" style="left:98.7px;top:205px;width:277px;height:6.8px"></div>
<div class="t" style="left:7px;top:216px;font-size:5.8px;transform-origin:0 50%;transform:scaleX(0.91);color:#2a4a7a;">1 item &nbsp;&nbsp;&nbsp;&nbsp;&nbsp; 1 item selected</div>
</div>
<div class="win" style="left:267px;top:244.5px">
<svg class="ic" style="left:4.8px;top:3.6px;width:4.6px;height:6.2px" viewBox="0 0 11 14"><path d="M0.5 0.5h6l1 1.5v12h-7z" fill="#f7dc82"/><path d="M0.5 0.5h2.5v13H0.5z" fill="#fcedb4"/><path d="M3.5 2.5h7v11.5h-7z" fill="#f5d46c"/></svg>
<div class="abs" style="left:14.4px;top:3.6px;width:0.5px;height:6px;background:#c4c4c4"></div>
<svg class="ic" style="left:20px;top:3.4px;width:6px;height:7px" viewBox="0 0 12 14"><rect x="0.5" y="1" width="11" height="12.5" fill="#fff" stroke="#9a9a9a" stroke-width="1"/><path d="M3 7.5l2.500 3L9.500 4" stroke="#e04a1e" stroke-width="1.6" fill="none"/></svg>
<svg class="ic" style="left:30.8px;top:3.6px;width:4.6px;height:6.2px" viewBox="0 0 11 14"><path d="M0.5 0.5h6l1 1.5v12h-7z" fill="#f7dc82"/><path d="M0.5 0.5h2.5v13H0.5z" fill="#fcedb4"/><path d="M3.5 2.5h7v11.5h-7z" fill="#f5d46c"/></svg>
<div class="abs" style="left:40.5px;top:5.4px;width:3.4px;height:0.6px;background:#333"></div>
<div class="abs" style="left:40.5px;top:6.6px;border-left:1.7px solid transparent;border-right:1.7px solid transparent;border-top:2px solid #333;width:0;height:0"></div>
<div class="abs" style="left:47.4px;top:3.6px;width:0.5px;height:6px;background:#c4c4c4"></div>
<div class="t" style="left:51px;top:5px;font-size:5.8px;transform-origin:0 50%;transform:scaleX(0.828);color:#8a8a8a;">SS200000135TL_D1_TILES_MOTIC</div>
<svg class="ic" style="left:318.5px;top:3.7px;width:6px;height:6px" viewBox="0 0 12 12"><path d="M1 6.5h10" stroke="#a4a4a4" stroke-width="1.1"/></svg>
<svg class="ic" style="left:339.5px;top:3.7px;width:6px;height:6px" viewBox="0 0 12 12"><rect x="1" y="1" width="10" height="10" fill="none" stroke="#a4a4a4" stroke-width="1.1"/></svg>
<svg class="ic" style="left:361px;top:3.7px;width:6px;height:6px" viewBox="0 0 12 12"><path d="M1 1l10 10M11 1L1 11" stroke="#a4a4a4" stroke-width="1.1"/></svg>
<div class="ribbon"></div>
<div class="file"></div>
<div class="home"></div>
<div class="t" style="left:9.5px;top:17.3px;font-size:5.8px;transform-origin:0 50%;transform:scaleX(0.856);color:#fff;">File</div>
<div class="t" style="left:33px;top:17.3px;font-size:5.8px;transform-origin:0 50%;transform:scaleX(0.905);color:#222;">Home</div>
<div class="t" style="left:60.8px;top:17.3px;font-size:5.8px;transform-origin:0 50%;transform:scaleX(0.84);color:#222;">Share</div>
<div class="t" style="left:88px;top:17.3px;font-size:5.8px;transform-origin:0 50%;transform:scaleX(0.906);color:#222;">View</div>
<svg class="ic" style="left:13px;top:30.5px;width:10px;height:11px" viewBox="0 0 20 22"><path d="M11 1l7 7-2 1-1-0.500-3.500 3.500 0.500 3-1.500 1.500L6 12l-4.500 5.500L6 12 2 8l1.500-1.500 3 0.500L10 3.500 9.500 2.500z" fill="#7a828a" stroke="#6a727a" stroke-width="0.800"/></svg>
<div class="rl " style="left:18px;top:46.4px;transform:translateX(-50%) scaleX(0.918)">Pin to Quick</div>
<div class="rl " style="left:18px;top:51.9px;transform:translateX(-50%) scaleX(0.842)">access</div>
<svg class="ic" style="left:38px;top:28.5px;width:12px;height:14px;opacity:.75;filter:saturate(.35);" viewBox="0 0 24 28"><path d="M1.500 1.500h9l4 4v14h-13z" fill="#f4f8ff" stroke="#8aa4cc" stroke-width="1"/><path d="M3.500 7h8M3.500 10h5" stroke="#b4c8ec" stroke-width="1.2"/><path d="M8.500 8.500h9l4 4v14h-13z" fill="#fff" stroke="#7d97c0" stroke-width="1"/><path d="M10.500 14h9v11h-9z" fill="#cfddf8"/><path d="M10.500 16.500h9M10.500 19.500h9M10.500 22.500h9" stroke="#fff" stroke-width="1"/></svg>
<div class="rl g " style="left:44px;top:46.4px;transform:translateX(-50%) scaleX(0.886)">Copy</div>
<svg class="ic" style="left:58.0px;top:28.5px;width:11px;height:15px;opacity:.75;filter:saturate(.35);" viewBox="0 0 22 30"><rect x="1.500" y="3.500" width="19" height="25" rx="1" fill="#8497b8" /><rect x="4" y="6.500" width="14" height="19.500" fill="#e6ebf8"/><rect x="7" y="1" width="8" height="5" rx="1" fill="#5d6f8c"/></svg>
<div class="rl g " style="left:63.5px;top:46.4px;transform:translateX(-50%) scaleX(0.85)">Paste</div>
<svg class="ic" style="left:75px;top:28.5px;width:6px;height:8px;opacity:.75;filter:saturate(.35);" viewBox="0 0 12 16"><path d="M2 0.500l6 10M10 0.500l-6 10" stroke="#5a6a7c" stroke-width="1.400"/><circle cx="3" cy="12.500" r="2.200" fill="none" stroke="#2a7fd8" stroke-width="1.500"/><circle cx="9" cy="12.500" r="2.200" fill="none" stroke="#2a7fd8" stroke-width="1.500"/></svg>
<div class="t g" style="left:84px;top:30.2px;font-size:5.8px;transform-origin:0 50%;transform:scaleX(0.92);">Cut</div>
<svg class="ic" style="left:74.5px;top:40.5px;width:8px;height:5px;opacity:.75;filter:saturate(.35);" viewBox="0 0 16 10"><rect x="0.500" y="0.500" width="15" height="9" fill="#cfe0f4" stroke="#6f94c4"/><rect x="2" y="3" width="7" height="4" fill="#2a6fc8"/></svg>
<div class="t g" style="left:84px;top:40.4px;font-size:5.8px;transform-origin:0 50%;transform:scaleX(0.93);">Copy path</div>
<svg class="ic" style="left:75.0px;top:48.8px;width:7px;height:9px;opacity:.75;filter:saturate(.35);" viewBox="0 0 14 18"><rect x="1" y="2" width="12" height="15" rx="1" fill="#f4f7fb" stroke="#6b84ac" stroke-width="1.600"/><rect x="4" y="0.500" width="6" height="3.500" fill="#5d6f8c"/><path d="M5 12l4-4M6 8h3v3" stroke="#2a6fc8" stroke-width="1.400" fill="none"/></svg>
<div class="t g" style="left:84px;top:50.6px;font-size:5.8px;transform-origin:0 50%;transform:scaleX(0.922);">Paste shortcut</div>
<div class="rl grp" style="left:61px;top:61.8px;transform:translateX(-50%) scaleX(0.959)">Clipboard</div>
<div class="sep" style="left:123.3px"></div>
<svg class="ic" style="left:129.5px;top:29px;width:13px;height:14px" viewBox="0 0 26 28"><path d="M1 1h18l1 1v25H1z" fill="#d3deee"/><path d="M1 1h5v26H1z" fill="#e3eaf5"/><path d="M25 17.500h-8v-4.500l-8 7 8 7v-4.500h8z" fill="#a8b9d8"/></svg>
<div class="rl g " style="left:134.5px;top:46.4px;transform:translateX(-50%) scaleX(0.938)">Move</div>
<div class="rl g " style="left:134.5px;top:51.9px;transform:translateX(-50%) scaleX(0.91)">to <span style="font-size:3.5px;vertical-align:1px">&#9660;</span></div>
<svg class="ic" style="left:149.3px;top:28.5px;width:13px;height:15px" viewBox="0 0 26 30"><path d="M1 3h19l1 1v25H1z" fill="#d3deee"/><path d="M1 3h5v26H1z" fill="#e3eaf5"/><path d="M12 1h8l4 4v12H12z" fill="#e8eef8" stroke="#b4c2dc" stroke-width="1"/><path d="M14 7h8M14 10h8M14 13h8" stroke="#c4d2ea" stroke-width="1.2"/></svg>
<div class="rl g " style="left:154px;top:46.4px;transform:translateX(-50%) scaleX(0.886)">Copy</div>
<div class="rl g " style="left:154px;top:51.9px;transform:translateX(-50%) scaleX(0.91)">to <span style="font-size:3.5px;vertical-align:1px">&#9660;</span></div>
<div class="sep" style="left:166.5px;height:28px;top:29px"></div>
<svg class="ic" style="left:172.0px;top:31.0px;width:11px;height:11px" viewBox="0 0 22 22"><path d="M2 2l18 18M20 2L2 20" stroke="#5a70a0" stroke-width="3.2" fill="none"/></svg>
<div class="rl " style="left:177.5px;top:46.4px;transform:translateX(-50%) scaleX(0.91)">Delete</div>
<div class="rl " style="left:177.5px;top:52.199999999999996px;transform:translateX(-50%) scaleX(0.91)"><span style="font-size:3.5px;vertical-align:1px">&#9660;</span></div>
<svg class="ic" style="left:191.5px;top:29.5px;width:14px;height:14px" viewBox="0 0 28 28"><rect x="1" y="8.500" width="20" height="11" fill="#e4ebf6" stroke="#a8b8d4" stroke-width="1"/><rect x="3.500" y="11" width="11" height="6" fill="#b4c6e4"/><path d="M18 2c2.500 0 3.500 1 3.500 2.500 0-1.500 1-2.500 3.500-2.500M18 26c2.500 0 3.500-1 3.500-2.500 0 1.500 1 2.500 3.500 2.500M21.500 4.500v19" stroke="#8a96aa" stroke-width="1.300" fill="none"/></svg>
<div class="rl g " style="left:198.5px;top:46.4px;transform:translateX(-50%) scaleX(0.91)">Rename</div>
<div class="rl grp" style="left:167px;top:61.8px;transform:translateX(-50%) scaleX(0.91)">Organize</div>
<div class="sep" style="left:212px"></div>
<svg class="ic" style="left:219.5px;top:29px;width:9px;height:13px" viewBox="0 0 18 26"><path d="M1 1h11l2 3v21H1z" fill="#f8de86"/><path d="M1 1h5v24H1z" fill="#fcefbe"/><path d="M7 4h10v21H7z" fill="#f6d56e"/></svg>
<div class="rl " style="left:224px;top:46.4px;transform:translateX(-50%) scaleX(0.91)">New</div>
<div class="rl " style="left:224px;top:51.9px;transform:translateX(-50%) scaleX(0.91)">folder</div>
<svg class="ic" style="left:236.0px;top:27.5px;width:10px;height:8px" viewBox="0 0 20 16"><path d="M1 1h7l3 3v11H1z" fill="#fff" stroke="#7d97b8" stroke-width="1.200"/><path d="M4 4h7l2 2v8H4z" fill="#eaf1fa" stroke="#7d97b8" stroke-width="1"/><path d="M15 7h5l-2.500 3z" fill="#333"/></svg>
<svg class="ic" style="left:236.0px;top:38.5px;width:10px;height:8px" viewBox="0 0 20 16"><path d="M2 1h7l3 3v11H2z" fill="#fff" stroke="#5f7fa8" stroke-width="1.400"/><path d="M0 4l3 3" stroke="#2a7fe0" stroke-width="1.500"/><path d="M15 7h5l-2.500 3z" fill="#333"/></svg>
<div class="rl grp" style="left:231px;top:61.8px;transform:translateX(-50%) scaleX(0.91)">New</div>
<div class="sep" style="left:251px"></div>
<svg class="ic" style="left:260.5px;top:28.5px;width:12px;height:15px" viewBox="0 0 24 30"><path d="M1.500 1.500h15l6 6v21h-21z" fill="#fff" stroke="#a8a8a8" stroke-width="1"/><path d="M6 14l4 5 8-10" stroke="#e04a1e" stroke-width="2.600" fill="none"/></svg>
<div class="rl " style="left:266.5px;top:46.4px;transform:translateX(-50%) scaleX(0.91)">Properties</div>
<div class="rl " style="left:266.5px;top:52.199999999999996px;transform:translateX(-50%) scaleX(0.91)"><span style="font-size:3.5px;vertical-align:1px">&#9660;</span></div>
<svg class="ic" style="left:282.0px;top:28.5px;width:7px;height:8px;opacity:.75;filter:saturate(.35);" viewBox="0 0 14 16"><rect x="1" y="1" width="9" height="14" fill="#eaf1fa" stroke="#7d97b8" stroke-width="1.200"/><rect x="6" y="6" width="7" height="9" fill="#4a8fd8"/></svg>
<div class="t g" style="left:291px;top:30.2px;font-size:5.8px;transform-origin:0 50%;transform:scaleX(0.91);">Open <span style="font-size:3.5px;vertical-align:1px">&#9660;</span></div>
<svg class="ic" style="left:282.0px;top:39px;width:7px;height:8px;opacity:.75;filter:saturate(.35);" viewBox="0 0 14 16"><rect x="1" y="1" width="11" height="14" fill="#fff" stroke="#7d97b8" stroke-width="1.200"/><path d="M4 12l7-8" stroke="#4a8fd8" stroke-width="1.600"/></svg>
<div class="t g" style="left:291px;top:40.4px;font-size:5.8px;transform-origin:0 50%;transform:scaleX(0.91);">Edit</div>
<svg class="ic" style="left:282.0px;top:49.3px;width:8px;height:8px" viewBox="0 0 16 16"><path d="M1 1h6l1 2h6v11H1z" fill="#f0c84e"/><circle cx="11" cy="11" r="4.500" fill="#3aa048" stroke="#fff" stroke-width="0.800"/><path d="M11 8.500v2.500h2" stroke="#fff" stroke-width="1" fill="none"/></svg>
<div class="t" style="left:291px;top:50.6px;font-size:5.8px;transform-origin:0 50%;transform:scaleX(0.91);">History</div>
<div class="rl grp" style="left:282px;top:61.8px;transform:translateX(-50%) scaleX(0.91)">Open</div>
<div class="sep" style="left:313px"></div>
<svg class="ic" style="left:317.5px;top:29.0px;width:7px;height:7px" viewBox="0 0 14 14"><rect x="0.500" y="0.500" width="6" height="6" fill="#4a9be8"/><rect x="7.500" y="0.500" width="6" height="6" fill="#4a9be8"/><rect x="0.500" y="7.500" width="6" height="6" fill="#4a9be8"/><rect x="7.500" y="7.500" width="6" height="6" fill="#4a9be8"/><path d="M0 7h14M7 0v14" stroke="#fff" stroke-width="1"/></svg>
<div class="t" style="left:326px;top:30.2px;font-size:5.8px;transform-origin:0 50%;transform:scaleX(0.91);">Select all</div>
<svg class="ic" style="left:317.5px;top:39.5px;width:7px;height:7px" viewBox="0 0 14 14"><rect x="0.500" y="0.500" width="5.500" height="5.500" fill="#f4f4f4" stroke="#bbb" stroke-dasharray="1.500 1"/><rect x="8" y="0.500" width="5.500" height="5.500" fill="#f4f4f4" stroke="#bbb" stroke-dasharray="1.500 1"/><rect x="0.500" y="8" width="5.500" height="5.500" fill="#f4f4f4" stroke="#bbb" stroke-dasharray="1.500 1"/><rect x="8" y="8" width="5.500" height="5.500" fill="#f4f4f4" stroke="#bbb" stroke-dasharray="1.500 1"/></svg>
<div class="t" style="left:326px;top:40.4px;font-size:5.8px;transform-origin:0 50%;transform:scaleX(0.91);">Select none</div>
<svg class="ic" style="left:317.5px;top:49.8px;width:7px;height:7px" viewBox="0 0 14 14"><rect x="0.500" y="0.500" width="5.500" height="5.500" fill="#fff" stroke="#8ab" /><rect x="8" y="0.500" width="5.500" height="5.500" fill="#4a9be8"/><rect x="0.500" y="8" width="5.500" height="5.500" fill="#4a9be8"/><rect x="8" y="8" width="5.500" height="5.500" fill="#fff" stroke="#8ab"/></svg>
<div class="t" style="left:326px;top:50.6px;font-size:5.8px;transform-origin:0 50%;transform:scaleX(0.91);">Invert selection</div>
<div class="rl grp" style="left:340px;top:61.8px;transform:translateX(-50%) scaleX(0.91)">Select</div>
<div class="sep" style="left:367.5px"></div>
<svg class="ic" style="left:6px;top:74.0px;width:6px;height:5px" viewBox="0 0 12 10"><path d="M5 0.5L0.5 5 5 9.500M0.500 5h11" stroke="#444" stroke-width="1.7" fill="none"/></svg>
<svg class="ic" style="left:20px;top:74.0px;width:6px;height:5px" viewBox="0 0 12 10"><path d="M7 0.5L11.5 5 7 9.500M11.500 5H0.500" stroke="#c8c8c8" stroke-width="1.2" fill="none"/></svg>
<svg class="ic" style="left:32.5px;top:75.7px;width:3.5px;height:2px" viewBox="0 0 7 4"><path d="M0.5 0.5l3 3 3-3" stroke="#888" stroke-width="1" fill="none"/></svg>
<svg class="ic" style="left:40.5px;top:73.5px;width:5px;height:6px" viewBox="0 0 10 12"><path d="M0.5 5L5 0.5 9.500 5M5 0.500v11" stroke="#444" stroke-width="1.2" fill="none"/></svg>
<div class="addr" style="left:50px;width:239.5px"></div>
<svg class="ic" style="left:52.6px;top:72.5px;width:4.6px;height:6.2px" viewBox="0 0 11 14"><path d="M0.5 0.5h6l1 1.5v12h-7z" fill="#f7dc82"/><path d="M0.5 0.5h2.5v13H0.5z" fill="#fcedb4"/><path d="M3.5 2.5h7v11.5h-7z" fill="#f5d46c"/></svg>
<svg class="ic" style="left:62.5px;top:75.4px;width:2px;height:3.4px" viewBox="0 0 4 7"><path d="M0.7 0.700l2.600 2.800-2.600 2.800" stroke="#555" stroke-width="1" fill="none"/></svg>
<div class="t" style="left:69.0px;top:74.3px;font-size:5.8px;transform-origin:0 50%;transform:scaleX(0.878);color:#222;">This PC</div>
<svg class="ic" style="left:91.6098475px;top:75.4px;width:2px;height:3.4px" viewBox="0 0 4 7"><path d="M0.7 0.700l2.600 2.800-2.600 2.800" stroke="#555" stroke-width="1" fill="none"/></svg>
<div class="t" style="left:98.1098475px;top:74.3px;font-size:5.8px;transform-origin:0 50%;transform:scaleX(0.919);color:#222;">DATA (D:)</div>
<svg class="ic" style="left:126.102287578125px;top:75.4px;width:2px;height:3.4px" viewBox="0 0 4 7"><path d="M0.7 0.700l2.600 2.800-2.600 2.800" stroke="#555" stroke-width="1" fill="none"/></svg>
<div class="t" style="left:132.60228757812501px;top:74.3px;font-size:5.8px;transform-origin:0 50%;transform:scaleX(0.91);color:#222;">QC image</div>
<svg class="ic" style="left:160.86153445312502px;top:75.4px;width:2px;height:3.4px" viewBox="0 0 4 7"><path d="M0.7 0.700l2.600 2.800-2.600 2.800" stroke="#555" stroke-width="1" fill="none"/></svg>
<div class="t" style="left:167.36153445312502px;top:74.3px;font-size:5.8px;transform-origin:0 50%;transform:scaleX(0.828);color:#222;">SS200000135TL_D1_TILES_MOTIC</div>
<div class="abs" style="left:279px;top:71.5px;width:0.5px;height:9.5px;background:#e0e0e0"></div>
<svg class="ic" style="left:273.5px;top:75.5px;width:3.5px;height:2.5px" viewBox="0 0 7 5"><path d="M0.5 0.5l3 3.500 3-3.500" stroke="#444" stroke-width="1.1" fill="none"/></svg>
<svg class="ic" style="left:281.5px;top:73.5px;width:6px;height:6px" viewBox="0 0 12 12"><path d="M10 6a4 4 0 1 1-1.5-3.100" stroke="#444" stroke-width="1.2" fill="none"/><path d="M6.500 0.500l2.500 2.500-3 1.500" stroke="#444" stroke-width="1.1" fill="none"/></svg>
<div class="addr" style="left:294px;width:75px"></div>
<div class="t" style="left:299px;top:73.7px;font-size:5.8px;transform-origin:0 50%;transform:scaleX(0.91);color:#8a8a8a;">Search SS200000135TL...</div>
<svg class="ic" style="left:361.5px;top:73.5px;width:5.5px;height:6px" viewBox="0 0 11 12"><circle cx="6.5" cy="4.5" r="3.3" stroke="#555" stroke-width="1.2" fill="none"/><path d="M4.200 7L0.800 11" stroke="#555" stroke-width="1.4"/></svg>
<svg class="ic" style="left:12.5px;top:91.4px;width:6px;height:5.5px" viewBox="0 0 13 12"><rect x="2" y="1" width="10" height="7" fill="#4aa8ea"/><path d="M0 3l3 6h6" stroke="#9ab" stroke-width="1.500" fill="none"/><rect x="4" y="9.500" width="7" height="1.500" fill="#6a8aa8"/></svg>
<div class="t" style="left:21px;top:92.69999999999999px;font-size:5.8px;transform-origin:0 50%;transform:scaleX(0.878);color:#222;">This PC</div>
<svg class="ic" style="left:15.3px;top:102.43px;width:6.500px;height:6.500px" viewBox="0 0 13 13"><path d="M6.500 0.500l5.500 2.500v7l-5.500 2.500L1 10V3z" fill="#29b6e8"/><path d="M6.500 6v6.500L1 10V3z" fill="#1a8fd0"/><path d="M1 3l5.500 3L12 3 6.500 0.500z" fill="#7fdcf7"/></svg>
<div class="t" style="left:25px;top:103.69999999999999px;font-size:5.8px;transform-origin:0 50%;transform:scaleX(0.934);color:#222;">3D Objects</div>
<div class="abs" style="left:15.3px;top:114.16px;width:7px;height:5px;background:#1a86e0;border-radius:0.500px"></div>
<div class="t" style="left:25px;top:114.69999999999999px;font-size:5.8px;transform-origin:0 50%;transform:scaleX(0.935);color:#222;">Desktop</div>
<svg class="ic" style="left:15.8px;top:124.39px;width:5.500px;height:7px" viewBox="0 0 11 14"><rect x="0.500" y="0.500" width="10" height="13" fill="#e8eef4" stroke="#9fb2c4"/><path d="M2.500 4h6M2.500 6.500h6M2.500 9h6" stroke="#8aa0b6" stroke-width="1"/></svg>
<div class="t" style="left:25px;top:125.69999999999999px;font-size:5.8px;transform-origin:0 50%;transform:scaleX(0.968);color:#222;">Documents</div>
<svg class="ic" style="left:15.8px;top:135.62px;width:6px;height:7px" viewBox="0 0 12 14"><path d="M3.500 0h5v6h3.500L6 13 0 6h3.500z" fill="#2a7fe0"/></svg>
<div class="t" style="left:25px;top:137.7px;font-size:5.8px;transform-origin:0 50%;transform:scaleX(0.944);color:#222;">Downloads</div>
<svg class="ic" style="left:15.3px;top:146.85000000000002px;width:7px;height:7px" viewBox="0 0 14 14"><circle cx="7" cy="3.500" r="3" fill="#e8452c"/><circle cx="3.500" cy="7.500" r="3" fill="#f4a91e"/><circle cx="10.500" cy="7.500" r="3" fill="#3b8de0"/><circle cx="7" cy="10.500" r="3" fill="#4cb648"/></svg>
<div class="t" style="left:25px;top:148.7px;font-size:5.8px;transform-origin:0 50%;transform:scaleX(0.962);color:#222;">FileAudit</div>
<svg class="ic" style="left:16.3px;top:158.07999999999998px;width:5px;height:7px" viewBox="0 0 10 14"><path d="M3 0h2c0 3 4 3 4 7-1-2-3-2-4-2v6a2.500 2.500 0 1 1-2-2.400z" fill="#1e7fe0"/></svg>
<div class="t" style="left:25px;top:159.7px;font-size:5.8px;transform-origin:0 50%;transform:scaleX(0.977);color:#222;">Music</div>
<svg class="ic" style="left:15.3px;top:170.31px;width:7px;height:5.500px" viewBox="0 0 14 11"><rect x="0.500" y="0.500" width="13" height="10" fill="#dfe8f0" stroke="#8fa3b6"/><path d="M1 9l4-4 3 3 2-1.500 3 2.500z" fill="#4a90c8"/><rect x="1.500" y="1.500" width="11" height="3" fill="#7db4e0"/></svg>
<div class="t" style="left:25px;top:170.7px;font-size:5.8px;transform-origin:0 50%;transform:scaleX(0.935);color:#222;">Pictures</div>
<svg class="ic" style="left:15.8px;top:180.54000000000002px;width:6px;height:7px" viewBox="0 0 12 14"><rect x="0" y="0" width="12" height="14" fill="#3c4650"/><rect x="2.500" y="2" width="7" height="6" fill="#4a8fd0"/><rect x="2.500" y="9" width="7" height="3.500" fill="#9a6a3a"/></svg>
<div class="t" style="left:25px;top:181.7px;font-size:5.8px;transform-origin:0 50%;transform:scaleX(0.925);color:#222;">Videos</div>
<svg class="ic" style="left:15.3px;top:191.77px;width:7.5px;height:7px" viewBox="0 0 15 14"><path d="M1 9l3-2h10l-2 2.500v2.500H1z" fill="#c4cad0"/><path d="M1 9.500h11v2.500H1z" fill="#8e969e"/><path d="M1.500 0.500h5.500v6H1.500z" fill="#2aa4ea"/><path d="M4.200 0.500v6M1.500 3.500h5.500" stroke="#bfe6fa" stroke-width="0.6"/><rect x="9.500" y="10.300" width="2" height="1" fill="#5ae06a"/></svg>
<div class="t" style="left:25px;top:193.7px;font-size:5.8px;transform-origin:0 50%;transform:scaleX(0.954);color:#222;">Windows (C:)</div>
<div class="sel" style="left:0;top:201.0px;width:81px;height:11px"></div>
<svg class="ic" style="left:15.3px;top:204.5px;width:7.5px;height:5px" viewBox="0 0 15 10"><path d="M1 4l3-2.500h10l-2 3v3H1z" fill="#9aa0a6"/><path d="M1 4.500h11v3H1z" fill="#3c4248"/></svg>
<div class="t" style="left:25px;top:204.7px;font-size:5.8px;transform-origin:0 50%;transform:scaleX(0.919);color:#222;">DATA (D:)</div>
<div class="sb" style="left:81.8px;top:84px;width:7px;height:129px"></div>
<svg class="ic" style="left:83.3px;top:87px;width:4.4px;height:3px;overflow:visible" viewBox="0 0 8.8 6"><path d="M0.800 5l3.600-4 3.600 4" stroke="#333" stroke-width="2" fill="none"/></svg>
<svg class="ic" style="left:83.3px;top:207.3px;width:4.4px;height:3px;overflow:visible" viewBox="0 0 8.8 6"><path d="M0.800 1l3.600 4 3.600-4" stroke="#333" stroke-width="2" fill="none"/></svg>
<div class="thumb" style="left:81.8px;top:108.5px;width:7px;height:63.5px"></div>
<svg class="ic" style="left:99.5px;top:89.7px;width:4.8px;height:6.4px" viewBox="0 0 11 14"><path d="M0.5 0.5h6l1 1.5v12h-7z" fill="#f7dc82"/><path d="M0.5 0.5h2.5v13H0.5z" fill="#fcedb4"/><path d="M3.5 2.5h7v11.5h-7z" fill="#f5d46c"/></svg>
<div class="t" style="left:107.4px;top:90.7px;font-size:5.8px;transform-origin:0 50%;transform:scaleX(0.825);color:#222;">SS200000135TL_D1</div>
<svg class="ic" style="left:100px;top:99.9px;width:5px;height:7px" viewBox="0 0 10 14"><path d="M0.500 0.500h6l3 3v10h-9z" fill="#fff" stroke="#8a8a8a" stroke-width="1"/><path d="M2 6h6M2 8.500h6M2 11h4" stroke="#9aa" stroke-width="0.800"/></svg>
<div class="t" style="left:107.4px;top:100.7px;font-size:5.8px;transform-origin:0 50%;transform:scaleX(0.91);color:#222;">1.ini</div>
<svg class="ic" style="left:100px;top:108.9px;width:5px;height:7px" viewBox="0 0 10 14"><path d="M0.500 0.500h6l3 3v10h-9z" fill="#fff" stroke="#8a8a8a" stroke-width="1"/><rect x="2" y="5" width="6" height="5.500" fill="#2a6fd8"/></svg>
<div class="t" style="left:107.4px;top:109.7px;font-size:5.8px;transform-origin:0 50%;transform:scaleX(0.91);color:#222;">3.jpg</div>
<svg class="ic" style="left:100px;top:118.9px;width:5px;height:7px" viewBox="0 0 10 14"><path d="M0.500 0.500h6l3 3v10h-9z" fill="#fff" stroke="#8a8a8a" stroke-width="1"/><path d="M2 6h6M2 8.500h6M2 11h4" stroke="#9aa" stroke-width="0.800"/></svg>
<div class="t" style="left:107.4px;top:119.7px;font-size:5.8px;transform-origin:0 50%;transform:scaleX(0.91);color:#222;">info.ini</div>
<div class="t" style="left:7px;top:216px;font-size:5.8px;transform-origin:0 50%;transform:scaleX(0.91);color:#2a4a7a;">4 items</div>
</div>
<div class="win act" style="left:517px;top:258px">
<svg class="ic" style="left:4.8px;top:3.6px;width:4.6px;height:6.2px" viewBox="0 0 11 14"><path d="M0.5 0.5h6l1 1.5v12h-7z" fill="#f7dc82"/><path d="M0.5 0.5h2.5v13H0.5z" fill="#fcedb4"/><path d="M3.5 2.5h7v11.5h-7z" fill="#f5d46c"/></svg>
<div class="abs" style="left:14.4px;top:3.6px;width:0.5px;height:6px;background:#c4c4c4"></div>
<svg class="ic" style="left:20px;top:3.4px;width:6px;height:7px" viewBox="0 0 12 14"><rect x="0.5" y="1" width="11" height="12.5" fill="#fff" stroke="#9a9a9a" stroke-width="1"/><path d="M3 7.5l2.500 3L9.500 4" stroke="#e04a1e" stroke-width="1.6" fill="none"/></svg>
<svg class="ic" style="left:30.8px;top:3.6px;width:4.6px;height:6.2px" viewBox="0 0 11 14"><path d="M0.5 0.5h6l1 1.5v12h-7z" fill="#f7dc82"/><path d="M0.5 0.5h2.5v13H0.5z" fill="#fcedb4"/><path d="M3.5 2.5h7v11.5h-7z" fill="#f5d46c"/></svg>
<div class="abs" style="left:40.5px;top:5.4px;width:3.4px;height:0.6px;background:#333"></div>
<div class="abs" style="left:40.5px;top:6.6px;border-left:1.7px solid transparent;border-right:1.7px solid transparent;border-top:2px solid #333;width:0;height:0"></div>
<div class="abs" style="left:47.4px;top:3.6px;width:0.5px;height:6px;background:#c4c4c4"></div>
<div class="t" style="left:51px;top:5px;font-size:5.8px;transform-origin:0 50%;transform:scaleX(0.825);color:#111;">SS200000135TL_D1</div>
<svg class="ic" style="left:318.5px;top:3.7px;width:6px;height:6px" viewBox="0 0 12 12"><path d="M1 6.5h10" stroke="#111" stroke-width="1.5"/></svg>
<svg class="ic" style="left:339.5px;top:3.7px;width:6px;height:6px" viewBox="0 0 12 12"><rect x="1" y="1" width="10" height="10" fill="none" stroke="#111" stroke-width="1.5"/></svg>
<svg class="ic" style="left:361px;top:3.7px;width:6px;height:6px" viewBox="0 0 12 12"><path d="M1 1l10 10M11 1L1 11" stroke="#111" stroke-width="1.5"/></svg>
<div class="ribbon"></div>
<div class="file"></div>
<div class="home"></div>
<div class="t" style="left:9.5px;top:17.3px;font-size:5.8px;transform-origin:0 50%;transform:scaleX(0.856);color:#fff;">File</div>
<div class="t" style="left:33px;top:17.3px;font-size:5.8px;transform-origin:0 50%;transform:scaleX(0.905);color:#222;">Home</div>
<div class="t" style="left:60.8px;top:17.3px;font-size:5.8px;transform-origin:0 50%;transform:scaleX(0.84);color:#222;">Share</div>
<div class="t" style="left:88px;top:17.3px;font-size:5.8px;transform-origin:0 50%;transform:scaleX(0.906);color:#222;">View</div>
<svg class="ic" style="left:356.5px;top:18px;width:4px;height:3px" viewBox="0 0 8 6"><path d="M0.5 5l3.5-4 3.5 4" fill="none" stroke="#888" stroke-width="1"/></svg>
<div class="abs" style="left:365.5px;top:15.5px;width:8px;height:8px;border-radius:4px;background:#1467c8;color:#fff;font-size:6px;font-weight:bold;text-align:center;line-height:8px">?</div>
<svg class="ic" style="left:13px;top:30.5px;width:10px;height:11px" viewBox="0 0 20 22"><path d="M11 1l7 7-2 1-1-0.500-3.500 3.500 0.500 3-1.500 1.500L6 12l-4.500 5.500L6 12 2 8l1.500-1.500 3 0.500L10 3.500 9.500 2.500z" fill="#7a828a" stroke="#6a727a" stroke-width="0.800"/></svg>
<div class="rl " style="left:18px;top:46.4px;transform:translateX(-50%) scaleX(0.918)">Pin to Quick</div>
<div class="rl " style="left:18px;top:51.9px;transform:translateX(-50%) scaleX(0.842)">access</div>
<svg class="ic" style="left:38px;top:28.5px;width:12px;height:14px;opacity:.75;filter:saturate(.35);" viewBox="0 0 24 28"><path d="M1.500 1.500h9l4 4v14h-13z" fill="#f4f8ff" stroke="#8aa4cc" stroke-width="1"/><path d="M3.500 7h8M3.500 10h5" stroke="#b4c8ec" stroke-width="1.2"/><path d="M8.500 8.500h9l4 4v14h-13z" fill="#fff" stroke="#7d97c0" stroke-width="1"/><path d="M10.500 14h9v11h-9z" fill="#cfddf8"/><path d="M10.500 16.500h9M10.500 19.500h9M10.500 22.500h9" stroke="#fff" stroke-width="1"/></svg>
<div class="rl g " style="left:44px;top:46.4px;transform:translateX(-50%) scaleX(0.886)">Copy</div>
<svg class="ic" style="left:58.0px;top:28.5px;width:11px;height:15px;opacity:.75;filter:saturate(.35);" viewBox="0 0 22 30"><rect x="1.500" y="3.500" width="19" height="25" rx="1" fill="#8497b8" /><rect x="4" y="6.500" width="14" height="19.500" fill="#e6ebf8"/><rect x="7" y="1" width="8" height="5" rx="1" fill="#5d6f8c"/></svg>
<div class="rl g " style="left:63.5px;top:46.4px;transform:translateX(-50%) scaleX(0.85)">Paste</div>
<svg class="ic" style="left:75px;top:28.5px;width:6px;height:8px;opacity:.75;filter:saturate(.35);" viewBox="0 0 12 16"><path d="M2 0.500l6 10M10 0.500l-6 10" stroke="#5a6a7c" stroke-width="1.400"/><circle cx="3" cy="12.500" r="2.200" fill="none" stroke="#2a7fd8" stroke-width="1.500"/><circle cx="9" cy="12.500" r="2.200" fill="none" stroke="#2a7fd8" stroke-width="1.500"/></svg>
<div class="t g" style="left:84px;top:30.2px;font-size:5.8px;transform-origin:0 50%;transform:scaleX(0.92);">Cut</div>
<svg class="ic" style="left:74.5px;top:40.5px;width:8px;height:5px;opacity:.75;filter:saturate(.35);" viewBox="0 0 16 10"><rect x="0.500" y="0.500" width="15" height="9" fill="#cfe0f4" stroke="#6f94c4"/><rect x="2" y="3" width="7" height="4" fill="#2a6fc8"/></svg>
<div class="t g" style="left:84px;top:40.4px;font-size:5.8px;transform-origin:0 50%;transform:scaleX(0.93);">Copy path</div>
<svg class="ic" style="left:75.0px;top:48.8px;width:7px;height:9px;opacity:.75;filter:saturate(.35);" viewBox="0 0 14 18"><rect x="1" y="2" width="12" height="15" rx="1" fill="#f4f7fb" stroke="#6b84ac" stroke-width="1.600"/><rect x="4" y="0.500" width="6" height="3.500" fill="#5d6f8c"/><path d="M5 12l4-4M6 8h3v3" stroke="#2a6fc8" stroke-width="1.400" fill="none"/></svg>
<div class="t g" style="left:84px;top:50.6px;font-size:5.8px;transform-origin:0 50%;transform:scaleX(0.922);">Paste shortcut</div>
<div class="rl grp" style="left:61px;top:61.8px;transform:translateX(-50%) scaleX(0.959)">Clipboard</div>
<div class="sep" style="left:123.3px"></div>
<svg class="ic" style="left:129.5px;top:29px;width:13px;height:14px" viewBox="0 0 26 28"><path d="M1 1h18l1 1v25H1z" fill="#d3deee"/><path d="M1 1h5v26H1z" fill="#e3eaf5"/><path d="M25 17.500h-8v-4.500l-8 7 8 7v-4.500h8z" fill="#a8b9d8"/></svg>
<div class="rl g " style="left:134.5px;top:46.4px;transform:translateX(-50%) scaleX(0.938)">Move</div>
<div class="rl g " style="left:134.5px;top:51.9px;transform:translateX(-50%) scaleX(0.91)">to <span style="font-size:3.5px;vertical-align:1px">&#9660;</span></div>
<svg class="ic" style="left:149.3px;top:28.5px;width:13px;height:15px" viewBox="0 0 26 30"><path d="M1 3h19l1 1v25H1z" fill="#d3deee"/><path d="M1 3h5v26H1z" fill="#e3eaf5"/><path d="M12 1h8l4 4v12H12z" fill="#e8eef8" stroke="#b4c2dc" stroke-width="1"/><path d="M14 7h8M14 10h8M14 13h8" stroke="#c4d2ea" stroke-width="1.2"/></svg>
<div class="rl g " style="left:154px;top:46.4px;transform:translateX(-50%) scaleX(0.886)">Copy</div>
<div class="rl g " style="left:154px;top:51.9px;transform:translateX(-50%) scaleX(0.91)">to <span style="font-size:3.5px;vertical-align:1px">&#9660;</span></div>
<div class="sep" style="left:166.5px;height:28px;top:29px"></div>
<svg class="ic" style="left:172.0px;top:31.0px;width:11px;height:11px" viewBox="0 0 22 22"><path d="M2 2l18 18M20 2L2 20" stroke="#5a70a0" stroke-width="3.2" fill="none"/></svg>
<div class="rl " style="left:177.5px;top:46.4px;transform:translateX(-50%) scaleX(0.91)">Delete</div>
<div class="rl " style="left:177.5px;top:52.199999999999996px;transform:translateX(-50%) scaleX(0.91)"><span style="font-size:3.5px;vertical-align:1px">&#9660;</span></div>
<svg class="ic" style="left:191.5px;top:29.5px;width:14px;height:14px" viewBox="0 0 28 28"><rect x="1" y="8.500" width="20" height="11" fill="#e4ebf6" stroke="#a8b8d4" stroke-width="1"/><rect x="3.500" y="11" width="11" height="6" fill="#b4c6e4"/><path d="M18 2c2.500 0 3.500 1 3.500 2.500 0-1.500 1-2.500 3.500-2.500M18 26c2.500 0 3.500-1 3.500-2.500 0 1.500 1 2.500 3.500 2.500M21.500 4.500v19" stroke="#8a96aa" stroke-width="1.300" fill="none"/></svg>
<div class="rl g " style="left:198.5px;top:46.4px;transform:translateX(-50%) scaleX(0.91)">Rename</div>
<div class="rl grp" style="left:167px;top:61.8px;transform:translateX(-50%) scaleX(0.91)">Organize</div>
<div class="sep" style="left:212px"></div>
<svg class="ic" style="left:219.5px;top:29px;width:9px;height:13px" viewBox="0 0 18 26"><path d="M1 1h11l2 3v21H1z" fill="#f8de86"/><path d="M1 1h5v24H1z" fill="#fcefbe"/><path d="M7 4h10v21H7z" fill="#f6d56e"/></svg>
<div class="rl " style="left:224px;top:46.4px;transform:translateX(-50%) scaleX(0.91)">New</div>
<div class="rl " style="left:224px;top:51.9px;transform:translateX(-50%) scaleX(0.91)">folder</div>
<svg class="ic" style="left:236.0px;top:27.5px;width:10px;height:8px" viewBox="0 0 20 16"><path d="M1 1h7l3 3v11H1z" fill="#fff" stroke="#7d97b8" stroke-width="1.200"/><path d="M4 4h7l2 2v8H4z" fill="#eaf1fa" stroke="#7d97b8" stroke-width="1"/><path d="M15 7h5l-2.500 3z" fill="#333"/></svg>
<svg class="ic" style="left:236.0px;top:38.5px;width:10px;height:8px" viewBox="0 0 20 16"><path d="M2 1h7l3 3v11H2z" fill="#fff" stroke="#5f7fa8" stroke-width="1.400"/><path d="M0 4l3 3" stroke="#2a7fe0" stroke-width="1.500"/><path d="M15 7h5l-2.500 3z" fill="#333"/></svg>
<div class="rl grp" style="left:231px;top:61.8px;transform:translateX(-50%) scaleX(0.91)">New</div>
<div class="sep" style="left:251px"></div>
<svg class="ic" style="left:260.5px;top:28.5px;width:12px;height:15px" viewBox="0 0 24 30"><path d="M1.500 1.500h15l6 6v21h-21z" fill="#fff" stroke="#a8a8a8" stroke-width="1"/><path d="M6 14l4 5 8-10" stroke="#e04a1e" stroke-width="2.600" fill="none"/></svg>
<div class="rl " style="left:266.5px;top:46.4px;transform:translateX(-50%) scaleX(0.91)">Properties</div>
<div class="rl " style="left:266.5px;top:52.199999999999996px;transform:translateX(-50%) scaleX(0.91)"><span style="font-size:3.5px;vertical-align:1px">&#9660;</span></div>
<svg class="ic" style="left:282.0px;top:28.5px;width:7px;height:8px;opacity:.75;filter:saturate(.35);" viewBox="0 0 14 16"><rect x="1" y="1" width="9" height="14" fill="#eaf1fa" stroke="#7d97b8" stroke-width="1.200"/><rect x="6" y="6" width="7" height="9" fill="#4a8fd8"/></svg>
<div class="t g" style="left:291px;top:30.2px;font-size:5.8px;transform-origin:0 50%;transform:scaleX(0.91);">Open <span style="font-size:3.5px;vertical-align:1px">&#9660;</span></div>
<svg class="ic" style="left:282.0px;top:39px;width:7px;height:8px;opacity:.75;filter:saturate(.35);" viewBox="0 0 14 16"><rect x="1" y="1" width="11" height="14" fill="#fff" stroke="#7d97b8" stroke-width="1.200"/><path d="M4 12l7-8" stroke="#4a8fd8" stroke-width="1.600"/></svg>
<div class="t g" style="left:291px;top:40.4px;font-size:5.8px;transform-origin:0 50%;transform:scaleX(0.91);">Edit</div>
<svg class="ic" style="left:282.0px;top:49.3px;width:8px;height:8px" viewBox="0 0 16 16"><path d="M1 1h6l1 2h6v11H1z" fill="#f0c84e"/><circle cx="11" cy="11" r="4.500" fill="#3aa048" stroke="#fff" stroke-width="0.800"/><path d="M11 8.500v2.500h2" stroke="#fff" stroke-width="1" fill="none"/></svg>
<div class="t" style="left:291px;top:50.6px;font-size:5.8px;transform-origin:0 50%;transform:scaleX(0.91);">History</div>
<div class="rl grp" style="left:282px;top:61.8px;transform:translateX(-50%) scaleX(0.91)">Open</div>
<div class="sep" style="left:313px"></div>
<svg class="ic" style="left:317.5px;top:29.0px;width:7px;height:7px" viewBox="0 0 14 14"><rect x="0.500" y="0.500" width="6" height="6" fill="#4a9be8"/><rect x="7.500" y="0.500" width="6" height="6" fill="#4a9be8"/><rect x="0.500" y="7.500" width="6" height="6" fill="#4a9be8"/><rect x="7.500" y="7.500" width="6" height="6" fill="#4a9be8"/><path d="M0 7h14M7 0v14" stroke="#fff" stroke-width="1"/></svg>
<div class="t" style="left:326px;top:30.2px;font-size:5.8px;transform-origin:0 50%;transform:scaleX(0.91);">Select all</div>
<svg class="ic" style="left:317.5px;top:39.5px;width:7px;height:7px" viewBox="0 0 14 14"><rect x="0.500" y="0.500" width="5.500" height="5.500" fill="#f4f4f4" stroke="#bbb" stroke-dasharray="1.500 1"/><rect x="8" y="0.500" width="5.500" height="5.500" fill="#f4f4f4" stroke="#bbb" stroke-dasharray="1.500 1"/><rect x="0.500" y="8" width="5.500" height="5.500" fill="#f4f4f4" stroke="#bbb" stroke-dasharray="1.500 1"/><rect x="8" y="8" width="5.500" height="5.500" fill="#f4f4f4" stroke="#bbb" stroke-dasharray="1.500 1"/></svg>
<div class="t" style="left:326px;top:40.4px;font-size:5.8px;transform-origin:0 50%;transform:scaleX(0.91);">Select none</div>
<svg class="ic" style="left:317.5px;top:49.8px;width:7px;height:7px" viewBox="0 0 14 14"><rect x="0.500" y="0.500" width="5.500" height="5.500" fill="#fff" stroke="#8ab" /><rect x="8" y="0.500" width="5.500" height="5.500" fill="#4a9be8"/><rect x="0.500" y="8" width="5.500" height="5.500" fill="#4a9be8"/><rect x="8" y="8" width="5.500" height="5.500" fill="#fff" stroke="#8ab"/></svg>
<div class="t" style="left:326px;top:50.6px;font-size:5.8px;transform-origin:0 50%;transform:scaleX(0.91);">Invert selection</div>
<div class="rl grp" style="left:340px;top:61.8px;transform:translateX(-50%) scaleX(0.91)">Select</div>
<div class="sep" style="left:367.5px"></div>
<svg class="ic" style="left:6px;top:74.0px;width:6px;height:5px" viewBox="0 0 12 10"><path d="M5 0.5L0.5 5 5 9.500M0.500 5h11" stroke="#444" stroke-width="1.7" fill="none"/></svg>
<svg class="ic" style="left:20px;top:74.0px;width:6px;height:5px" viewBox="0 0 12 10"><path d="M7 0.5L11.5 5 7 9.500M11.500 5H0.500" stroke="#c8c8c8" stroke-width="1.2" fill="none"/></svg>
<svg class="ic" style="left:32.5px;top:75.7px;width:3.5px;height:2px" viewBox="0 0 7 4"><path d="M0.5 0.5l3 3 3-3" stroke="#888" stroke-width="1" fill="none"/></svg>
<svg class="ic" style="left:40.5px;top:73.5px;width:5px;height:6px" viewBox="0 0 10 12"><path d="M0.5 5L5 0.5 9.500 5M5 0.500v11" stroke="#444" stroke-width="1.2" fill="none"/></svg>
<div class="addr" style="left:50px;width:239.5px"></div>
<svg class="ic" style="left:52.6px;top:72.5px;width:4.6px;height:6.2px" viewBox="0 0 11 14"><path d="M0.5 0.5h6l1 1.5v12h-7z" fill="#f7dc82"/><path d="M0.5 0.5h2.5v13H0.5z" fill="#fcedb4"/><path d="M3.5 2.5h7v11.5h-7z" fill="#f5d46c"/></svg>
<svg class="ic" style="left:62.5px;top:75.4px;width:3.4px;height:3.2px" viewBox="0 0 7 6.500"><path d="M3 0.500L0.700 3.200 3 6M6.200 0.500L3.900 3.200 6.200 6" stroke="#444" stroke-width="0.9" fill="none"/></svg>
<div class="t" style="left:68.3px;top:74.3px;font-size:5.8px;transform-origin:0 50%;transform:scaleX(0.91);color:#222;">QC image</div>
<svg class="ic" style="left:96.559246875px;top:75.4px;width:2px;height:3.4px" viewBox="0 0 4 7"><path d="M0.7 0.700l2.600 2.800-2.600 2.800" stroke="#555" stroke-width="1" fill="none"/></svg>
<div class="t" style="left:103.059246875px;top:74.3px;font-size:5.8px;transform-origin:0 50%;transform:scaleX(0.828);color:#222;">SS200000135TL_D1_TILES_MOTIC</div>
<svg class="ic" style="left:186.5786118125px;top:75.4px;width:2px;height:3.4px" viewBox="0 0 4 7"><path d="M0.7 0.700l2.600 2.800-2.600 2.800" stroke="#555" stroke-width="1" fill="none"/></svg>
<div class="t" style="left:193.0786118125px;top:74.3px;font-size:5.8px;transform-origin:0 50%;transform:scaleX(0.825);color:#222;">SS200000135TL_D1</div>
<div class="abs" style="left:279px;top:71.5px;width:0.5px;height:9.5px;background:#e0e0e0"></div>
<svg class="ic" style="left:273.5px;top:75.5px;width:3.5px;height:2.5px" viewBox="0 0 7 5"><path d="M0.5 0.5l3 3.500 3-3.500" stroke="#444" stroke-width="1.1" fill="none"/></svg>
<svg class="ic" style="left:281.5px;top:73.5px;width:6px;height:6px" viewBox="0 0 12 12"><path d="M10 6a4 4 0 1 1-1.5-3.100" stroke="#444" stroke-width="1.2" fill="none"/><path d="M6.500 0.500l2.500 2.500-3 1.500" stroke="#444" stroke-width="1.1" fill="none"/></svg>
<div class="addr" style="left:294px;width:75px"></div>
<div class="t" style="left:299px;top:73.7px;font-size:5.8px;transform-origin:0 50%;transform:scaleX(0.91);color:#8a8a8a;">Search SS200000135TL...</div>
<svg class="ic" style="left:361.5px;top:73.5px;width:5.5px;height:6px" viewBox="0 0 11 12"><circle cx="6.5" cy="4.5" r="3.3" stroke="#555" stroke-width="1.2" fill="none"/><path d="M4.200 7L0.800 11" stroke="#555" stroke-width="1.4"/></svg>
<svg class="ic" style="left:12.5px;top:91.4px;width:6px;height:5.5px" viewBox="0 0 13 12"><rect x="2" y="1" width="10" height="7" fill="#4aa8ea"/><path d="M0 3l3 6h6" stroke="#9ab" stroke-width="1.500" fill="none"/><rect x="4" y="9.500" width="7" height="1.500" fill="#6a8aa8"/></svg>
<div class="t" style="left:21px;top:92.19999999999999px;font-size:5.8px;transform-origin:0 50%;transform:scaleX(0.878);color:#222;">This PC</div>
<svg class="ic" style="left:15.3px;top:102.43px;width:6.500px;height:6.500px" viewBox="0 0 13 13"><path d="M6.500 0.500l5.500 2.500v7l-5.500 2.500L1 10V3z" fill="#29b6e8"/><path d="M6.500 6v6.500L1 10V3z" fill="#1a8fd0"/><path d="M1 3l5.500 3L12 3 6.500 0.500z" fill="#7fdcf7"/></svg>
<div class="t" style="left:25px;top:103.19999999999999px;font-size:5.8px;transform-origin:0 50%;transform:scaleX(0.934);color:#222;">3D Objects</div>
<div class="abs" style="left:15.3px;top:114.16px;width:7px;height:5px;background:#1a86e0;border-radius:0.500px"></div>
<div class="t" style="left:25px;top:115.19999999999999px;font-size:5.8px;transform-origin:0 50%;transform:scaleX(0.935);color:#222;">Desktop</div>
<svg class="ic" style="left:15.8px;top:124.39px;width:5.500px;height:7px" viewBox="0 0 11 14"><rect x="0.500" y="0.500" width="10" height="13" fill="#e8eef4" stroke="#9fb2c4"/><path d="M2.500 4h6M2.500 6.500h6M2.500 9h6" stroke="#8aa0b6" stroke-width="1"/></svg>
<div class="t" style="left:25px;top:126.19999999999999px;font-size:5.8px;transform-origin:0 50%;transform:scaleX(0.968);color:#222;">Documents</div>
<svg class="ic" style="left:15.8px;top:135.62px;width:6px;height:7px" viewBox="0 0 12 14"><path d="M3.500 0h5v6h3.500L6 13 0 6h3.500z" fill="#2a7fe0"/></svg>
<div class="t" style="left:25px;top:137.2px;font-size:5.8px;transform-origin:0 50%;transform:scaleX(0.944);color:#222;">Downloads</div>
<svg class="ic" style="left:15.3px;top:146.85000000000002px;width:7px;height:7px" viewBox="0 0 14 14"><circle cx="7" cy="3.500" r="3" fill="#e8452c"/><circle cx="3.500" cy="7.500" r="3" fill="#f4a91e"/><circle cx="10.500" cy="7.500" r="3" fill="#3b8de0"/><circle cx="7" cy="10.500" r="3" fill="#4cb648"/></svg>
<div class="t" style="left:25px;top:148.2px;font-size:5.8px;transform-origin:0 50%;transform:scaleX(0.962);color:#222;">FileAudit</div>
<svg class="ic" style="left:16.3px;top:158.07999999999998px;width:5px;height:7px" viewBox="0 0 10 14"><path d="M3 0h2c0 3 4 3 4 7-1-2-3-2-4-2v6a2.500 2.500 0 1 1-2-2.400z" fill="#1e7fe0"/></svg>
<div class="t" style="left:25px;top:159.2px;font-size:5.8px;transform-origin:0 50%;transform:scaleX(0.977);color:#222;">Music</div>
<svg class="ic" style="left:15.3px;top:170.31px;width:7px;height:5.500px" viewBox="0 0 14 11"><rect x="0.500" y="0.500" width="13" height="10" fill="#dfe8f0" stroke="#8fa3b6"/><path d="M1 9l4-4 3 3 2-1.500 3 2.500z" fill="#4a90c8"/><rect x="1.500" y="1.500" width="11" height="3" fill="#7db4e0"/></svg>
<div class="t" style="left:25px;top:171.2px;font-size:5.8px;transform-origin:0 50%;transform:scaleX(0.935);color:#222;">Pictures</div>
<svg class="ic" style="left:15.8px;top:180.54000000000002px;width:6px;height:7px" viewBox="0 0 12 14"><rect x="0" y="0" width="12" height="14" fill="#3c4650"/><rect x="2.500" y="2" width="7" height="6" fill="#4a8fd0"/><rect x="2.500" y="9" width="7" height="3.500" fill="#9a6a3a"/></svg>
<div class="t" style="left:25px;top:182.2px;font-size:5.8px;transform-origin:0 50%;transform:scaleX(0.925);color:#222;">Videos</div>
<svg class="ic" style="left:15.3px;top:191.77px;width:7.5px;height:7px" viewBox="0 0 15 14"><path d="M1 9l3-2h10l-2 2.500v2.500H1z" fill="#c4cad0"/><path d="M1 9.500h11v2.500H1z" fill="#8e969e"/><path d="M1.500 0.500h5.500v6H1.500z" fill="#2aa4ea"/><path d="M4.200 0.500v6M1.500 3.500h5.500" stroke="#bfe6fa" stroke-width="0.6"/><rect x="9.500" y="10.300" width="2" height="1" fill="#5ae06a"/></svg>
<div class="t" style="left:25px;top:193.2px;font-size:5.8px;transform-origin:0 50%;transform:scaleX(0.954);color:#222;">Windows (C:)</div>
<div class="sel" style="left:0;top:201.0px;width:81px;height:11px"></div>
<svg class="ic" style="left:15.3px;top:204.5px;width:7.5px;height:5px" viewBox="0 0 15 10"><path d="M1 4l3-2.500h10l-2 3v3H1z" fill="#9aa0a6"/><path d="M1 4.500h11v3H1z" fill="#3c4248"/></svg>
<div class="t" style="left:25px;top:204.2px;font-size:5.8px;transform-origin:0 50%;transform:scaleX(0.919);color:#222;">DATA (D:)</div>
<div class="sb" style="left:81.8px;top:84px;width:7px;height:129px"></div>
<svg class="ic" style="left:83.3px;top:87px;width:4.4px;height:3px;overflow:visible" viewBox="0 0 8.8 6"><path d="M0.800 5l3.600-4 3.600 4" stroke="#333" stroke-width="2" fill="none"/></svg>
<svg class="ic" style="left:83.3px;top:207.3px;width:4.4px;height:3px;overflow:visible" viewBox="0 0 8.8 6"><path d="M0.800 1l3.600 4 3.600-4" stroke="#333" stroke-width="2" fill="none"/></svg>
<div class="thumb" style="left:81.8px;top:108.5px;width:7px;height:63.5px"></div>
<div class="th" style="left:100.1px;top:91.0px"></div>
<div class="cap" style="left:121.35px;top:121.3px">controlD1_0005_0<br>000_2021-11-25_1<br>2-26-44-800.tif</div>
<div class="th" style="left:153.95px;top:91.0px"></div>
<div class="cap" style="left:175.2px;top:121.3px">controlD1_0005_0<br>001_2021-11-25_1<br>2-26-45-131.tif</div>
<div class="th" style="left:207.8px;top:91.0px"><svg class="ic" style="left:0;top:0;width:42.5px;height:28px" viewBox="0 0 42.5 28"><rect width="42.5" height="28" fill="#060606"/><clipPath id="ce2"><path d="M36 0C33 8 32 14 26 19 20 23 12 25 6 28H42.500V0z"/></clipPath><g clip-path="url(#ce2)"><rect width="42.5" height="28" filter="url(#nz2)" opacity=".2"/></g><path d="M36 0C33 8 32 14 26 19 20 23 12 25 6 28" stroke="#a0a0a0" stroke-width="0.5" fill="none" stroke-dasharray="1.2 0.600" opacity=".7"/><path d="M38 2c-2 6-1 10 1 14" stroke="#888" stroke-width="0.4" fill="none"/></svg></div>
<div class="cap" style="left:229.05px;top:121.3px">controlD1_0005_0<br>002_2021-11-25_1<br>2-26-45-475.tif</div>
<div class="th" style="left:261.65px;top:91.0px"><svg class="ic" style="left:0;top:0;width:42.5px;height:28px" viewBox="0 0 42.5 28"><rect width="42.5" height="28" fill="#141414"/><rect width="42.5" height="28" filter="url(#nz0)" opacity=".2"/></svg></div>
<div class="cap" style="left:282.9px;top:121.3px">controlD1_0005_0<br>003_2021-11-25_1<br>2-26-45-765.tif</div>
<div class="th" style="left:315.5px;top:91.0px"><svg class="ic" style="left:0;top:0;width:42.5px;height:28px" viewBox="0 0 42.5 28"><rect width="42.5" height="28" fill="#141414"/><rect width="42.5" height="28" filter="url(#nz1)" opacity=".2"/></svg></div>
<div class="cap" style="left:336.75px;top:121.3px">controlD1_0005_0<br>004_2021-11-25_1<br>2-26-46-210.tif</div>
<div class="th" style="left:100.1px;top:159.8px"><svg class="ic" style="left:0;top:0;width:42.5px;height:28px" viewBox="0 0 42.5 28"><rect width="42.5" height="28" fill="#080808"/><clipPath id="ca5"><path d="M0 0h20C21 8 22 12 24 16 21 20 21 24 21 28H0z"/></clipPath><g clip-path="url(#ca5)"><rect width="42.5" height="28" filter="url(#nz3)" opacity=".3"/></g><path d="M21 28C21 20 27 13.500 42.500 12.500v15.500z" fill="#242424"/><path d="M19.500 2C20.500 8 21.500 12 23.500 16M21 28C21 20 27 13.500 42.500 12.500" stroke="#b4b4b4" stroke-width="0.6" fill="none" opacity=".55"/></svg></div>
<div class="cap" style="left:121.35px;top:190.10000000000002px">controlD1_0005_0<br>005_2021-11-25_1<br>2-26-46-549.tif</div>
<div class="th" style="left:153.95px;top:159.8px"><svg class="ic" style="left:0;top:0;width:42.5px;height:28px" viewBox="0 0 42.5 28"><rect width="42.5" height="28" fill="#060606"/><clipPath id="cb6"><path d="M0 7C10 10 20 16 30 28H0z"/></clipPath><g clip-path="url(#cb6)"><rect width="42.5" height="28" filter="url(#nz4)" opacity=".25"/></g><path d="M0 7C10 10 20 16 30 28" stroke="#a8a8a8" stroke-width="0.5" fill="none" opacity=".55"/></svg></div>
<div class="cap" style="left:175.2px;top:190.10000000000002px">controlD1_0005_0<br>006_2021-11-25_1<br>2-26-46-885.tif</div>
<div class="th" style="left:207.8px;top:159.8px"></div>
<div class="cap" style="left:229.05px;top:190.10000000000002px">controlD1_0005_0<br>007_2021-11-25_1<br>2-26-47-212.tif</div>
<div class="th" style="left:261.65px;top:159.8px"></div>
<div class="cap" style="left:282.9px;top:190.10000000000002px">controlD1_0005_0<br>008_2021-11-25_1<br>2-26-47-549.tif</div>
<div class="th" style="left:315.5px;top:159.8px"></div>
<div class="cap" style="left:336.75px;top:190.10000000000002px">controlD1_0006_0<br>000_2021-11-25_1<br>2-26-48-768.tif</div>
<div class="sb" style="left:367.500px;top:84px;width:7px;height:129px"></div>
<svg class="ic" style="left:368.8px;top:87px;width:4.4px;height:3px;overflow:visible" viewBox="0 0 8.8 6"><path d="M0.800 5l3.600-4 3.600 4" stroke="#333" stroke-width="2" fill="none"/></svg>
<svg class="ic" style="left:368.8px;top:207.3px;width:4.4px;height:3px;overflow:visible" viewBox="0 0 8.8 6"><path d="M0.800 1l3.600 4 3.600-4" stroke="#333" stroke-width="2" fill="none"/></svg>
<div class="thumb" style="left:367.500px;top:135.500px;width:7px;height:8.500px"></div>
<svg class="ic" style="left:354.500px;top:214px;width:8px;height:7px" viewBox="0 0 16 14"><g fill="#aaa"><rect x="0" y="1" width="3" height="2.500"/><rect x="0" y="5.500" width="3" height="2.500"/><rect x="0" y="10" width="3" height="2.500"/><rect x="4.500" y="1.500" width="4" height="1.300"/><rect x="4.500" y="6" width="4" height="1.300"/><rect x="4.500" y="10.500" width="4" height="1.300"/><rect x="10" y="1.500" width="5" height="1.300"/><rect x="10" y="6" width="5" height="1.300"/><rect x="10" y="10.500" width="5" height="1.300"/></g></svg>
<div class="abs" style="left:363px;top:212.500px;width:10.2px;height:10.8px;background:#cce8fb;border:0.7px solid #74bff0"></div>
<svg class="ic" style="left:365px;top:215.3px;width:6.500px;height:5.500px" viewBox="0 0 13 11"><rect x="0.500" y="0.500" width="12" height="10" fill="#fff" stroke="#6a7a8a"/><rect x="2" y="2" width="9" height="5" fill="#4a6a8a"/></svg>
<div class="t" style="left:7px;top:216px;font-size:5.8px;transform-origin:0 50%;transform:scaleX(0.914);color:#2a4a7a;">117 items</div>
</div>
</body></html>
